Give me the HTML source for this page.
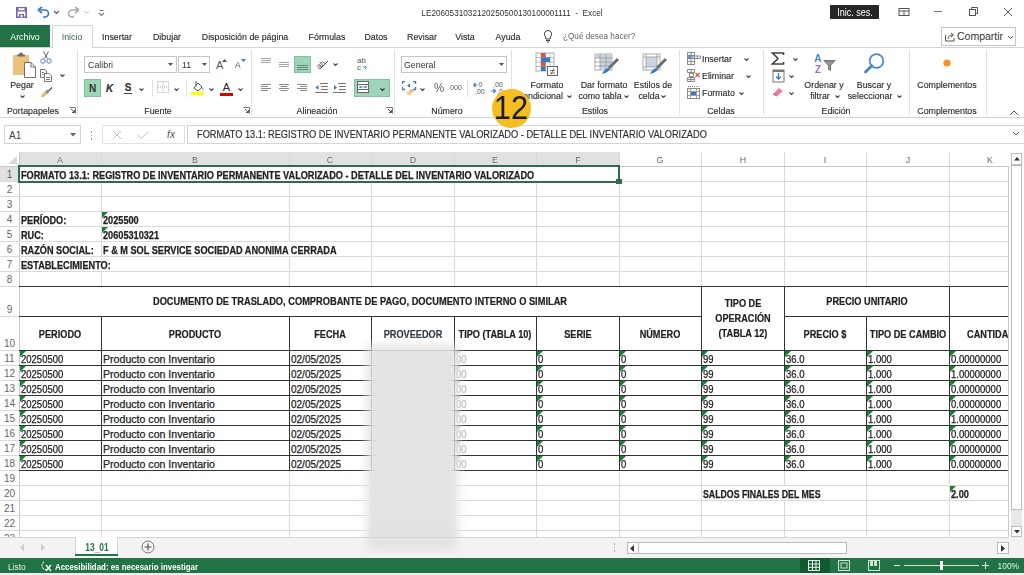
<!DOCTYPE html><html><head><meta charset="utf-8"><style>html,body{margin:0;padding:0;width:1024px;height:575px;overflow:hidden;background:#fff;}body{font-family:"Liberation Sans", sans-serif;position:relative;}.a{position:absolute;}.t{white-space:pre;}</style></head><body>
<svg class="a" style="left:15px;top:6px;" width="14" height="13" viewBox="0 0 14 13"><path d="M1.8 1.8 H11.2 V11.2 H1.8 Z" fill="none" stroke="#7f62b0" stroke-width="1.6"/><rect x="1" y="1" width="11" height="4.5" fill="#7f62b0"/><rect x="3.5" y="2.2" width="6" height="2" fill="#fff"/><rect x="4" y="8" width="5" height="3.5" fill="#7f62b0"/><rect x="5.5" y="9" width="2" height="2.5" fill="#fff"/></svg>
<svg class="a" style="left:37px;top:6px;" width="14" height="13" viewBox="0 0 14 13"><path d="M3 4 H8 A3.5 3.5 0 0 1 8 11 H6" fill="none" stroke="#3a78c3" stroke-width="1.6"/><path d="M1 4 L5 1 M1 4 L5 7" stroke="#3a78c3" stroke-width="1.6" fill="none"/></svg>
<svg class="a" style="left:53px;top:10px;" width="7" height="5" viewBox="0 0 7 5"><path d="M1 1 L3.5 3.5 L6 1" fill="none" stroke="#555" stroke-width="1.1"/></svg>
<svg class="a" style="left:66px;top:6px;" width="14" height="13" viewBox="0 0 14 13"><path d="M11 4 H6 A3.5 3.5 0 0 0 6 11 H8" fill="none" stroke="#aaa" stroke-width="1.6"/><path d="M13 4 L9 1 M13 4 L9 7" stroke="#aaa" stroke-width="1.6" fill="none"/></svg>
<svg class="a" style="left:83px;top:10px;" width="7" height="5" viewBox="0 0 7 5"><path d="M1 1 L3.5 3.5 L6 1" fill="none" stroke="#bbb" stroke-width="1"/></svg>
<svg class="a" style="left:98px;top:9px;" width="7" height="8" viewBox="0 0 7 8"><rect x="1.5" y="1" width="4" height="1" fill="#777"/><path d="M1 4 L3.5 6.5 L6 4" fill="none" stroke="#777" stroke-width="1.1"/></svg>
<div class="a t" style="left:112px;width:800px;text-align:center;top:8.88px;font-size:9px;line-height:9px;color:#333;font-weight:normal;transform:scaleX(0.91);transform-origin:center top;">LE2060531032120250500130100001111  -  Excel</div>
<div class="a" style="left:830px;top:5px;width:49px;height:14px;background:#262626;border-radius:1px;"></div>
<div class="a t" style="left:454.5px;width:800px;text-align:center;top:7.54px;font-size:10px;line-height:10px;color:#fff;font-weight:normal;transform:scaleX(0.9);transform-origin:center top;">Inic. ses.</div>
<svg class="a" style="left:898px;top:7px;" width="12" height="10" viewBox="0 0 12 10"><rect x="1" y="1.5" width="10" height="7" fill="none" stroke="#555" stroke-width="1"/><path d="M1 4 H11 M6 4 V8.5" stroke="#555" stroke-width="1"/></svg>
<div class="a" style="left:934px;top:11px;width:8px;height:1px;background:#777;"></div>
<svg class="a" style="left:968px;top:6px;" width="11" height="11" viewBox="0 0 11 11"><rect x="1.5" y="3.5" width="6" height="6" fill="none" stroke="#555" stroke-width="1"/><path d="M3.5 3.5 V1.5 H9.5 V7.5 H7.5" fill="none" stroke="#555" stroke-width="1"/></svg>
<svg class="a" style="left:1003px;top:7px;" width="10" height="10" viewBox="0 0 10 10"><path d="M1 1 L9 9 M9 1 L1 9" stroke="#555" stroke-width="1"/></svg>
<div class="a" style="left:0px;top:25px;width:50px;height:22px;background:#217346;"></div>
<div class="a t" style="left:-375px;width:800px;text-align:center;top:31.96px;font-size:9.5px;line-height:9.5px;color:#fff;font-weight:normal;transform:scaleX(0.93);transform-origin:center top;">Archivo</div>
<div class="a" style="left:52px;top:25px;width:41px;height:23px;background:#fff;border:1px solid #d4d4d4;box-sizing:border-box;border-bottom:none;"></div>
<div class="a" style="left:0px;top:47px;width:52px;height:1px;background:#d4d4d4;"></div>
<div class="a" style="left:93px;top:47px;width:931px;height:1px;background:#d4d4d4;"></div>
<div class="a t" style="left:-328px;width:800px;text-align:center;top:31.96px;font-size:9.5px;line-height:9.5px;color:#2e6b4d;font-weight:normal;transform:scaleX(0.93);transform-origin:center top;">Inicio</div>
<div class="a t" style="left:-282.7px;width:800px;text-align:center;top:31.96px;font-size:9.5px;line-height:9.5px;color:#2d2d2d;font-weight:normal;-webkit-text-stroke:0.15px currentColor;transform:scaleX(0.93);transform-origin:center top;">Insertar</div>
<div class="a t" style="left:-233.3px;width:800px;text-align:center;top:31.96px;font-size:9.5px;line-height:9.5px;color:#2d2d2d;font-weight:normal;-webkit-text-stroke:0.15px currentColor;transform:scaleX(0.93);transform-origin:center top;">Dibujar</div>
<div class="a t" style="left:-155.5px;width:800px;text-align:center;top:31.96px;font-size:9.5px;line-height:9.5px;color:#2d2d2d;font-weight:normal;-webkit-text-stroke:0.15px currentColor;transform:scaleX(0.93);transform-origin:center top;">Disposición de página</div>
<div class="a t" style="left:-73px;width:800px;text-align:center;top:31.96px;font-size:9.5px;line-height:9.5px;color:#2d2d2d;font-weight:normal;-webkit-text-stroke:0.15px currentColor;transform:scaleX(0.93);transform-origin:center top;">Fórmulas</div>
<div class="a t" style="left:-24px;width:800px;text-align:center;top:31.96px;font-size:9.5px;line-height:9.5px;color:#2d2d2d;font-weight:normal;-webkit-text-stroke:0.15px currentColor;transform:scaleX(0.93);transform-origin:center top;">Datos</div>
<div class="a t" style="left:22px;width:800px;text-align:center;top:31.96px;font-size:9.5px;line-height:9.5px;color:#2d2d2d;font-weight:normal;-webkit-text-stroke:0.15px currentColor;transform:scaleX(0.93);transform-origin:center top;">Revisar</div>
<div class="a t" style="left:65px;width:800px;text-align:center;top:31.96px;font-size:9.5px;line-height:9.5px;color:#2d2d2d;font-weight:normal;-webkit-text-stroke:0.15px currentColor;transform:scaleX(0.93);transform-origin:center top;">Vista</div>
<div class="a t" style="left:108px;width:800px;text-align:center;top:31.96px;font-size:9.5px;line-height:9.5px;color:#2d2d2d;font-weight:normal;-webkit-text-stroke:0.15px currentColor;transform:scaleX(0.93);transform-origin:center top;">Ayuda</div>
<svg class="a" style="left:543px;top:29px;" width="10" height="14" viewBox="0 0 10 14"><path d="M5 1.5 A3.6 3.6 0 0 1 7.2 8 V10 H2.8 V8 A3.6 3.6 0 0 1 5 1.5 Z" fill="none" stroke="#444" stroke-width="1"/><path d="M3 11.5 H7 M3.8 13 H6.2" stroke="#444" stroke-width="1"/></svg>
<div class="a t" style="left:563px;top:32.38px;font-size:9px;line-height:9px;color:#666;font-weight:normal;transform:scaleX(0.91);transform-origin:left top;">¿Qué desea hacer?</div>
<div class="a" style="left:941px;top:27px;width:75px;height:19px;background:#fff;border:1px solid #c6c6c6;box-sizing:border-box;"></div>
<svg class="a" style="left:944px;top:31px;" width="12" height="11" viewBox="0 0 12 11"><path d="M1.5 4 V10 H10 V7" fill="none" stroke="#555" stroke-width="1"/><path d="M4 8 Q4 4 9 4 M7 2 L9.5 4 L7 6" fill="none" stroke="#555" stroke-width="1"/></svg>
<div class="a t" style="left:957px;top:31.11px;font-size:10.5px;line-height:10.5px;color:#333;font-weight:normal;">Compartir</div>
<svg class="a" style="left:1007px;top:35px;" width="7" height="5" viewBox="0 0 7 5"><path d="M1 1 L3.5 3.5 L6 1" fill="none" stroke="#555" stroke-width="1"/></svg>
<div class="a" style="left:0px;top:117px;width:1024px;height:1px;background:#d4d4d4;"></div>
<div class="a" style="left:77px;top:50px;width:1px;height:65px;background:#e1e1e1;"></div>
<div class="a" style="left:251px;top:50px;width:1px;height:65px;background:#e1e1e1;"></div>
<div class="a" style="left:394px;top:50px;width:1px;height:65px;background:#e1e1e1;"></div>
<div class="a" style="left:511px;top:50px;width:1px;height:65px;background:#e1e1e1;"></div>
<div class="a" style="left:679px;top:50px;width:1px;height:65px;background:#e1e1e1;"></div>
<div class="a" style="left:763px;top:50px;width:1px;height:65px;background:#e1e1e1;"></div>
<div class="a" style="left:909px;top:50px;width:1px;height:65px;background:#e1e1e1;"></div>
<div class="a" style="left:986px;top:50px;width:1px;height:65px;background:#e1e1e1;"></div>
<div class="a t" style="left:-367px;width:800px;text-align:center;top:105.96px;font-size:9.5px;line-height:9.5px;color:#2d2d2d;font-weight:normal;-webkit-text-stroke:0.15px currentColor;transform:scaleX(0.93);transform-origin:center top;">Portapapeles</div>
<div class="a t" style="left:-242px;width:800px;text-align:center;top:105.96px;font-size:9.5px;line-height:9.5px;color:#2d2d2d;font-weight:normal;-webkit-text-stroke:0.15px currentColor;transform:scaleX(0.93);transform-origin:center top;">Fuente</div>
<div class="a t" style="left:-83px;width:800px;text-align:center;top:105.96px;font-size:9.5px;line-height:9.5px;color:#2d2d2d;font-weight:normal;-webkit-text-stroke:0.15px currentColor;transform:scaleX(0.93);transform-origin:center top;">Alineación</div>
<div class="a t" style="left:47px;width:800px;text-align:center;top:105.96px;font-size:9.5px;line-height:9.5px;color:#2d2d2d;font-weight:normal;-webkit-text-stroke:0.15px currentColor;transform:scaleX(0.93);transform-origin:center top;">Número</div>
<div class="a t" style="left:195px;width:800px;text-align:center;top:105.96px;font-size:9.5px;line-height:9.5px;color:#2d2d2d;font-weight:normal;-webkit-text-stroke:0.15px currentColor;transform:scaleX(0.93);transform-origin:center top;">Estilos</div>
<div class="a t" style="left:321px;width:800px;text-align:center;top:105.96px;font-size:9.5px;line-height:9.5px;color:#2d2d2d;font-weight:normal;-webkit-text-stroke:0.15px currentColor;transform:scaleX(0.93);transform-origin:center top;">Celdas</div>
<div class="a t" style="left:436px;width:800px;text-align:center;top:105.96px;font-size:9.5px;line-height:9.5px;color:#2d2d2d;font-weight:normal;-webkit-text-stroke:0.15px currentColor;transform:scaleX(0.93);transform-origin:center top;">Edición</div>
<div class="a t" style="left:547px;width:800px;text-align:center;top:105.96px;font-size:9.5px;line-height:9.5px;color:#2d2d2d;font-weight:normal;-webkit-text-stroke:0.15px currentColor;transform:scaleX(0.93);transform-origin:center top;">Complementos</div>
<svg class="a" style="left:69px;top:107px;" width="7" height="7" viewBox="0 0 7 7"><path d="M0.5 0.5 H6.5 V6.5" fill="none" stroke="#777" stroke-width="1"/><path d="M2 2 L5.5 5.5 M3 5.5 H5.5 V3" fill="none" stroke="#555" stroke-width="1"/></svg>
<svg class="a" style="left:243px;top:107px;" width="7" height="7" viewBox="0 0 7 7"><path d="M0.5 0.5 H6.5 V6.5" fill="none" stroke="#777" stroke-width="1"/><path d="M2 2 L5.5 5.5 M3 5.5 H5.5 V3" fill="none" stroke="#555" stroke-width="1"/></svg>
<svg class="a" style="left:386px;top:107px;" width="7" height="7" viewBox="0 0 7 7"><path d="M0.5 0.5 H6.5 V6.5" fill="none" stroke="#777" stroke-width="1"/><path d="M2 2 L5.5 5.5 M3 5.5 H5.5 V3" fill="none" stroke="#555" stroke-width="1"/></svg>
<svg class="a" style="left:11px;top:51px;" width="26" height="27" viewBox="0 0 26 27"><rect x="2" y="4" width="16" height="20" fill="#ebc27a"/><path d="M6 5.5 V3.5 H8 A2 2 0 0 1 12 3.5 H14 V5.5 Z" fill="#6e6e6e"/><path d="M13.5 11.5 H20 L24.5 16 V26.5 H13.5 Z" fill="#fff" stroke="#6e6e6e" stroke-width="1"/><path d="M20 11.5 V16 H24.5" fill="none" stroke="#6e6e6e" stroke-width="1"/></svg>
<div class="a t" style="left:-378px;width:800px;text-align:center;top:79.96px;font-size:9.5px;line-height:9.5px;color:#2d2d2d;font-weight:normal;-webkit-text-stroke:0.15px currentColor;transform:scaleX(0.93);transform-origin:center top;">Pegar</div>
<svg class="a" style="left:19px;top:94px;" width="7" height="5" viewBox="0 0 7 5"><path d="M1.5 1.5 L3.5 3.5 L5.5 1.5" fill="none" stroke="#444" stroke-width="1.1"/></svg>
<svg class="a" style="left:40px;top:51px;" width="12" height="13" viewBox="0 0 12 13"><path d="M3.5 0.5 L7.5 7.5 M8.5 0.5 L4.5 7.5" stroke="#666" stroke-width="1" fill="none"/><circle cx="3" cy="10" r="2.2" fill="none" stroke="#4f7fb8" stroke-width="1"/><circle cx="9" cy="10" r="2.2" fill="none" stroke="#4f7fb8" stroke-width="1"/></svg>
<svg class="a" style="left:40px;top:69px;" width="12" height="13" viewBox="0 0 12 13"><path d="M0.5 0.5 H5 L6.5 2 V8.5 H0.5 Z" fill="#fff" stroke="#777" stroke-width="1"/><path d="M4.5 4.5 H9 L11.5 7 V12.5 H4.5 Z" fill="#fff" stroke="#777" stroke-width="1"/><path d="M6 8.5 H10 M6 10.5 H10 M2 3.5 H4 M2 5.5 H3.5" stroke="#777" stroke-width="1"/></svg>
<svg class="a" style="left:59px;top:73px;" width="7" height="5" viewBox="0 0 7 5"><path d="M1.5 1.5 L3.5 3.5 L5.5 1.5" fill="none" stroke="#444" stroke-width="1.1"/></svg>
<svg class="a" style="left:40px;top:86px;" width="13" height="12" viewBox="0 0 13 12"><path d="M0.5 10 L5 5.5 L7.5 8 L2.5 11.5 Z" fill="#eab462"/><path d="M5 5.5 L7 3.5 L9.5 6 L7.5 8 Z" fill="#8a8a8a"/><path d="M8 4.5 L11.5 1 L12.5 2 L9 5.5 Z" fill="#5e5e5e"/></svg>
<div class="a" style="left:84px;top:56px;width:93px;height:17px;background:#fff;border:1px solid #c6c6c6;box-sizing:border-box;"></div>
<div class="a t" style="left:88px;top:59.96px;font-size:9.5px;line-height:9.5px;color:#333;font-weight:normal;transform:scaleX(0.93);transform-origin:left top;">Calibri</div>
<svg class="a" style="left:168px;top:63px;" width="5" height="3" viewBox="0 0 5 3"><path d="M0 0 H5 L2.5 3 Z" fill="#555"/></svg>
<div class="a" style="left:178px;top:56px;width:32px;height:17px;background:#fff;border:1px solid #c6c6c6;box-sizing:border-box;"></div>
<div class="a t" style="left:181.5px;top:59.96px;font-size:9.5px;line-height:9.5px;color:#333;font-weight:normal;transform:scaleX(0.93);transform-origin:left top;">11</div>
<svg class="a" style="left:202px;top:63px;" width="5" height="3" viewBox="0 0 5 3"><path d="M0 0 H5 L2.5 3 Z" fill="#555"/></svg>
<div class="a t" style="left:216px;top:59.69px;font-size:11px;line-height:11px;color:#555;font-weight:normal;">A</div>
<svg class="a" style="left:222px;top:59px;" width="5" height="3" viewBox="0 0 5 3"><path d="M0 3 L2.5 0 L5 3" fill="#555"/></svg>
<div class="a t" style="left:235px;top:61.38px;font-size:9px;line-height:9px;color:#555;font-weight:normal;transform:scaleX(0.93);transform-origin:left top;">A</div>
<svg class="a" style="left:241px;top:59px;" width="5" height="3" viewBox="0 0 5 3"><path d="M0 0 H5 L2.5 3 Z" fill="#3a78c3"/></svg>
<div class="a" style="left:84px;top:79px;width:17px;height:18px;background:#9fd5b7;border:1px solid #86bfa0;box-sizing:border-box;"></div>
<div class="a t" style="left:-307.5px;width:800px;text-align:center;top:83.53px;font-size:10px;line-height:10px;color:#333;font-weight:bold;">N</div>
<div class="a t" style="left:-290.5px;width:800px;text-align:center;top:83.53px;font-size:10px;line-height:10px;color:#2d2d2d;font-weight:bold;-webkit-text-stroke:0.15px currentColor;font-style:italic;">K</div>
<div class="a t" style="left:-272px;width:800px;text-align:center;top:83.03px;font-size:10px;line-height:10px;color:#2d2d2d;font-weight:bold;-webkit-text-stroke:0.15px currentColor;">S</div>
<div class="a" style="left:124px;top:93px;width:8px;height:1px;background:#444;"></div>
<svg class="a" style="left:138px;top:87px;" width="7" height="5" viewBox="0 0 7 5"><path d="M1.5 1.5 L3.5 3.5 L5.5 1.5" fill="none" stroke="#444" stroke-width="1.1"/></svg>
<div class="a" style="left:152px;top:80px;width:1px;height:17px;background:#e1e1e1;"></div>
<svg class="a" style="left:157px;top:81px;" width="12" height="13" viewBox="0 0 12 13"><rect x="0.5" y="0.5" width="11" height="11" fill="none" stroke="#aaa" stroke-width="1" stroke-dasharray="1 1"/><path d="M6 1 V11 M1 6 H11" stroke="#aaa" stroke-width="1" stroke-dasharray="1 1"/></svg>
<svg class="a" style="left:173px;top:87px;" width="7" height="5" viewBox="0 0 7 5"><path d="M1.5 1.5 L3.5 3.5 L5.5 1.5" fill="none" stroke="#444" stroke-width="1.1"/></svg>
<div class="a" style="left:186px;top:80px;width:1px;height:17px;background:#e1e1e1;"></div>
<svg class="a" style="left:190px;top:79px;" width="16" height="17" viewBox="0 0 16 17"><path d="M4 9 L8 4 L12 8 L8 12 Z" fill="#fff" stroke="#555" stroke-width="1"/><path d="M6 2 V7" stroke="#555" stroke-width="1"/><path d="M12 8 Q14 10 13.5 11.5 Q12 11 12 8" fill="#3a78c3"/><rect x="1" y="13" width="13" height="3" fill="#ffff00"/></svg>
<svg class="a" style="left:208px;top:87px;" width="7" height="5" viewBox="0 0 7 5"><path d="M1.5 1.5 L3.5 3.5 L5.5 1.5" fill="none" stroke="#444" stroke-width="1.1"/></svg>
<div class="a t" style="left:-173.5px;width:800px;text-align:center;top:81.69px;font-size:11px;line-height:11px;color:#2d2d2d;font-weight:normal;-webkit-text-stroke:0.15px currentColor;">A</div>
<div class="a" style="left:220px;top:93px;width:13px;height:3px;background:#e00000;"></div>
<svg class="a" style="left:237px;top:87px;" width="7" height="5" viewBox="0 0 7 5"><path d="M1.5 1.5 L3.5 3.5 L5.5 1.5" fill="none" stroke="#444" stroke-width="1.1"/></svg>
<svg class="a" style="left:261px;top:58px;" width="14" height="7" viewBox="0 0 14 7"><rect x="0" y="0" width="10" height="1" fill="#a6a6a6"/><rect x="0" y="2" width="10" height="1" fill="#a6a6a6"/><rect x="0" y="4" width="10" height="1" fill="#a6a6a6"/></svg>
<svg class="a" style="left:279px;top:62px;" width="14" height="7" viewBox="0 0 14 7"><rect x="0" y="0" width="10" height="1" fill="#a6a6a6"/><rect x="0" y="2" width="10" height="1" fill="#a6a6a6"/><rect x="0" y="4" width="10" height="1" fill="#a6a6a6"/></svg>
<div class="a" style="left:294px;top:56px;width:17px;height:17px;background:#9fd5b7;border:1px solid #86bfa0;box-sizing:border-box;"></div>
<svg class="a" style="left:297px;top:65px;" width="14" height="7" viewBox="0 0 14 7"><rect x="0" y="0" width="11" height="1" fill="#6a8a78"/><rect x="0" y="2" width="11" height="1" fill="#6a8a78"/><rect x="0" y="4" width="11" height="1" fill="#6a8a78"/></svg>
<svg class="a" style="left:315px;top:57px;" width="15" height="14" viewBox="0 0 15 14"><text x="1" y="10" font-size="8" font-family="Liberation Sans" fill="#555" transform="rotate(-40 6 7)">ab</text><path d="M5 12 L13 4" stroke="#555" stroke-width="1"/></svg>
<svg class="a" style="left:332px;top:62px;" width="7" height="5" viewBox="0 0 7 5"><path d="M1.5 1.5 L3.5 3.5 L5.5 1.5" fill="none" stroke="#444" stroke-width="1.1"/></svg>
<svg class="a" style="left:357px;top:56px;" width="12" height="15" viewBox="0 0 12 15"><text x="0" y="7" font-size="8" font-family="Liberation Sans" fill="#555">ab</text><text x="0" y="14" font-size="8" font-family="Liberation Sans" fill="#555">c</text><path d="M6 11 L9 11 M8 10 L9.5 11.5 L8 13" stroke="#3a78c3" stroke-width="0.9" fill="none"/></svg>
<svg class="a" style="left:261px;top:84px;" width="14" height="9" viewBox="0 0 14 9"><rect x="0" y="0" width="10" height="1" fill="#8a8a8a"/><rect x="0" y="2" width="7" height="1" fill="#8a8a8a"/><rect x="0" y="4" width="10" height="1" fill="#8a8a8a"/><rect x="0" y="6" width="7" height="1" fill="#8a8a8a"/></svg>
<svg class="a" style="left:279px;top:84px;" width="14" height="9" viewBox="0 0 14 9"><rect x="0" y="0" width="10" height="1" fill="#8a8a8a"/><rect x="1.5" y="2" width="7" height="1" fill="#8a8a8a"/><rect x="0" y="4" width="10" height="1" fill="#8a8a8a"/><rect x="1.5" y="6" width="7" height="1" fill="#8a8a8a"/></svg>
<svg class="a" style="left:297px;top:84px;" width="14" height="9" viewBox="0 0 14 9"><rect x="0" y="0" width="10" height="1" fill="#8a8a8a"/><rect x="3" y="2" width="7" height="1" fill="#8a8a8a"/><rect x="0" y="4" width="10" height="1" fill="#8a8a8a"/><rect x="3" y="6" width="7" height="1" fill="#8a8a8a"/></svg>
<svg class="a" style="left:315px;top:83px;" width="13" height="10" viewBox="0 0 13 10"><rect x="5" y="0" width="8" height="1" fill="#777"/><rect x="6" y="3" width="7" height="1" fill="#777"/><rect x="6" y="6" width="7" height="1" fill="#777"/><rect x="0" y="9" width="13" height="1" fill="#777"/><path d="M0.5 4.5 L3.5 2 V7 Z" fill="#3a78c3"/></svg>
<svg class="a" style="left:333px;top:83px;" width="13" height="10" viewBox="0 0 13 10"><rect x="5" y="0" width="8" height="1" fill="#777"/><rect x="6" y="3" width="7" height="1" fill="#777"/><rect x="6" y="6" width="7" height="1" fill="#777"/><rect x="0" y="9" width="13" height="1" fill="#777"/><path d="M4 4.5 L1 2 V7 Z" fill="#3a78c3"/></svg>
<div class="a" style="left:354px;top:79px;width:36px;height:18px;background:#9fd5b7;border:1px solid #86bfa0;box-sizing:border-box;"></div>
<svg class="a" style="left:357px;top:81px;" width="13" height="13" viewBox="0 0 13 13"><rect x="0.5" y="0.5" width="11" height="11" fill="#fff" stroke="#666" stroke-width="1"/><path d="M0.5 3.5 H11.5 M0.5 8.5 H11.5" stroke="#666" stroke-width="1"/><path d="M2.5 6 H9.5 M2.5 6 L4 5 M2.5 6 L4 7 M9.5 6 L8 5 M9.5 6 L8 7" stroke="#3a78c3" stroke-width="0.9" fill="none"/></svg>
<svg class="a" style="left:379px;top:87px;" width="7" height="5" viewBox="0 0 7 5"><path d="M1.5 1.5 L3.5 3.5 L5.5 1.5" fill="none" stroke="#333" stroke-width="1.1"/></svg>
<div class="a" style="left:401px;top:56px;width:106px;height:17px;background:#fff;border:1px solid #c6c6c6;box-sizing:border-box;"></div>
<div class="a t" style="left:404px;top:59.96px;font-size:9.5px;line-height:9.5px;color:#333;font-weight:normal;transform:scaleX(0.93);transform-origin:left top;">General</div>
<svg class="a" style="left:499px;top:63px;" width="5" height="3" viewBox="0 0 5 3"><path d="M0 0 H5 L2.5 3 Z" fill="#555"/></svg>
<svg class="a" style="left:402px;top:81px;" width="15" height="15" viewBox="0 0 15 15"><rect x="0.5" y="0.5" width="13" height="8" fill="#fff"/><path d="M0.5 3 V0.5 H3 M11 0.5 H13.5 V3 M13.5 6 V8.5 H11 M3 8.5 H0.5 V6" fill="none" stroke="#3a78c3" stroke-width="1.4"/><path d="M5 4.5 L8 2.5 V6.5 Z" fill="#3a78c3"/><ellipse cx="9.5" cy="10" rx="2.6" ry="1.4" fill="#f2b36a"/><ellipse cx="7" cy="12.5" rx="2.6" ry="1.4" fill="#f5c890"/></svg>
<svg class="a" style="left:419px;top:87px;" width="7" height="5" viewBox="0 0 7 5"><path d="M1.5 1.5 L3.5 3.5 L5.5 1.5" fill="none" stroke="#444" stroke-width="1.1"/></svg>
<div class="a t" style="left:38.5px;width:800px;text-align:center;top:82.34px;font-size:12px;line-height:12px;color:#5a5a5a;font-weight:normal;transform:scaleX(0.95);transform-origin:center top;">%</div>
<div class="a t" style="left:55.5px;width:800px;text-align:center;top:84.15px;font-size:7.5px;line-height:7.5px;color:#5a5a5a;font-weight:normal;transform:scaleX(0.95);transform-origin:center top;">000</div>
<div class="a" style="left:467px;top:80px;width:1px;height:17px;background:#e1e1e1;"></div>
<svg class="a" style="left:472px;top:80px;" width="14" height="15" viewBox="0 0 14 15"><text x="6.5" y="7" font-size="7" font-family="Liberation Sans" fill="#555">0</text><text x="3" y="13.5" font-size="7" font-family="Liberation Sans" fill="#555">,00</text><path d="M1.5 5 H5.5 M1.5 5 L3.5 3 M1.5 5 L3.5 7" stroke="#3a78c3" stroke-width="1.1" fill="none"/></svg>
<svg class="a" style="left:490px;top:80px;" width="14" height="15" viewBox="0 0 14 15"><text x="3" y="7" font-size="7" font-family="Liberation Sans" fill="#555">,00</text><text x="7" y="13.5" font-size="7" font-family="Liberation Sans" fill="#555">,0</text><path d="M1 11 H5.5 M5.5 11 L3.5 9 M5.5 11 L3.5 13" stroke="#3a78c3" stroke-width="1.1" fill="none"/></svg>
<svg class="a" style="left:535px;top:52px;" width="24" height="25" viewBox="0 0 24 25"><g stroke="#999" stroke-width="0.8" fill="#fff"><rect x="1" y="1" width="18" height="18"/></g><path d="M1 5.5 H19 M1 10 H19 M1 14.5 H19 M6 1 V19 M10.5 1 V19 M15 1 V19" stroke="#aaa" stroke-width="0.8"/><rect x="6" y="1" width="4.5" height="4.5" fill="#e0523f"/><rect x="6" y="5.5" width="9" height="4.5" fill="#3a78c3"/><rect x="6" y="10" width="4.5" height="4.5" fill="#e0523f"/><rect x="6" y="14.5" width="4.5" height="4.5" fill="#3a78c3"/><rect x="12.5" y="14.5" width="10" height="9" fill="#fff" stroke="#666" stroke-width="1"/><path d="M15 21 H20 M15 18.5 H20 M19 16.5 L16 22.5" stroke="#555" stroke-width="0.8"/></svg>
<div class="a t" style="left:147px;width:800px;text-align:center;top:79.96px;font-size:9.5px;line-height:9.5px;color:#2d2d2d;font-weight:normal;-webkit-text-stroke:0.15px currentColor;transform:scaleX(0.93);transform-origin:center top;">Formato</div>
<div class="a t" style="left:143px;width:800px;text-align:center;top:90.96px;font-size:9.5px;line-height:9.5px;color:#2d2d2d;font-weight:normal;-webkit-text-stroke:0.15px currentColor;transform:scaleX(0.93);transform-origin:center top;">ondicional</div>
<svg class="a" style="left:566px;top:94px;" width="7" height="5" viewBox="0 0 7 5"><path d="M1.5 1.5 L3.5 3.5 L5.5 1.5" fill="none" stroke="#444" stroke-width="1.1"/></svg>
<svg class="a" style="left:594px;top:53px;" width="26" height="24" viewBox="0 0 26 24"><rect x="1" y="1" width="17" height="16" fill="#fff" stroke="#999" stroke-width="0.8"/><rect x="1" y="1" width="17" height="4" fill="#c8d4e0"/><rect x="6" y="5" width="12" height="12" fill="#c8d4e0"/><path d="M1 5 H18 M1 9 H18 M1 13 H18 M6 1 V17 M12 1 V17" stroke="#999" stroke-width="0.8"/><path d="M14 14 L23 5 L25 7 L16 16 Z" fill="#6b6b6b"/><path d="M8 21 Q11 14 16 15 Q16 19 8 21 Z" fill="#3a78c3"/></svg>
<div class="a t" style="left:204px;width:800px;text-align:center;top:79.96px;font-size:9.5px;line-height:9.5px;color:#2d2d2d;font-weight:normal;-webkit-text-stroke:0.15px currentColor;transform:scaleX(0.93);transform-origin:center top;">Dar formato</div>
<div class="a t" style="left:200px;width:800px;text-align:center;top:90.96px;font-size:9.5px;line-height:9.5px;color:#2d2d2d;font-weight:normal;-webkit-text-stroke:0.15px currentColor;transform:scaleX(0.93);transform-origin:center top;">como tabla</div>
<svg class="a" style="left:623px;top:94px;" width="7" height="5" viewBox="0 0 7 5"><path d="M1.5 1.5 L3.5 3.5 L5.5 1.5" fill="none" stroke="#444" stroke-width="1.1"/></svg>
<svg class="a" style="left:642px;top:53px;" width="26" height="24" viewBox="0 0 26 24"><rect x="1" y="1" width="17" height="16" fill="#fff" stroke="#999" stroke-width="0.8"/><rect x="4" y="4" width="11" height="10" fill="#c8d4e0"/><path d="M1 4 H18 M1 14 H18 M4 1 V17 M15 1 V17" stroke="#999" stroke-width="0.8"/><path d="M14 14 L23 5 L25 7 L16 16 Z" fill="#6b6b6b"/><path d="M8 21 Q11 14 16 15 Q16 19 8 21 Z" fill="#3a78c3"/></svg>
<div class="a t" style="left:253px;width:800px;text-align:center;top:79.96px;font-size:9.5px;line-height:9.5px;color:#2d2d2d;font-weight:normal;-webkit-text-stroke:0.15px currentColor;transform:scaleX(0.93);transform-origin:center top;">Estilos de</div>
<div class="a t" style="left:249px;width:800px;text-align:center;top:90.96px;font-size:9.5px;line-height:9.5px;color:#2d2d2d;font-weight:normal;-webkit-text-stroke:0.15px currentColor;transform:scaleX(0.93);transform-origin:center top;">celda</div>
<svg class="a" style="left:660px;top:94px;" width="7" height="5" viewBox="0 0 7 5"><path d="M1.5 1.5 L3.5 3.5 L5.5 1.5" fill="none" stroke="#444" stroke-width="1.1"/></svg>
<svg class="a" style="left:687px;top:52px;" width="15" height="13" viewBox="0 0 15 13"><path d="M0.5 0.5 H7.5 V12.5 H0.5 Z M0.5 3.5 H7.5 M0.5 6.5 H7.5 M0.5 9.5 H7.5 M4 0.5 V12.5 M7.5 4 H13.5 V6.5 H7.5 M10.5 4 V6.5" fill="none" stroke="#8a8a8a" stroke-width="1"/><rect x="1" y="4" width="6" height="2" fill="#dbe6f2"/><path d="M1.5 5 H6.5 M1.5 5 L3.5 3.5 M1.5 5 L3.5 6.5" stroke="#3a78c3" stroke-width="1.1" fill="none"/></svg>
<div class="a t" style="left:702px;top:54.46px;font-size:9.5px;line-height:9.5px;color:#2d2d2d;font-weight:normal;-webkit-text-stroke:0.15px currentColor;transform:scaleX(0.93);transform-origin:left top;">Insertar</div>
<svg class="a" style="left:743px;top:57px;" width="7" height="5" viewBox="0 0 7 5"><path d="M1.5 1.5 L3.5 3.5 L5.5 1.5" fill="none" stroke="#444" stroke-width="1.1"/></svg>
<svg class="a" style="left:687px;top:69px;" width="15" height="13" viewBox="0 0 15 13"><path d="M0.5 0.5 H7.5 V3.5 H0.5 Z M0.5 8.5 H7.5 V12.5 H0.5 Z M4 0.5 V3.5 M4 8.5 V12.5 M0.5 10.5 H7.5 M2.5 4.5 H6.5 V7.5 H2.5 Z" fill="none" stroke="#8a8a8a" stroke-width="1"/><path d="M8.5 4 L12.5 8 M12.5 4 L8.5 8" stroke="#e0523f" stroke-width="1.2"/></svg>
<div class="a t" style="left:702px;top:71.46px;font-size:9.5px;line-height:9.5px;color:#2d2d2d;font-weight:normal;-webkit-text-stroke:0.15px currentColor;transform:scaleX(0.93);transform-origin:left top;">Eliminar</div>
<svg class="a" style="left:745px;top:74px;" width="7" height="5" viewBox="0 0 7 5"><path d="M1.5 1.5 L3.5 3.5 L5.5 1.5" fill="none" stroke="#444" stroke-width="1.1"/></svg>
<svg class="a" style="left:687px;top:86px;" width="13" height="13" viewBox="0 0 13 13"><rect x="0.5" y="2.5" width="12" height="10" fill="#fff" stroke="#8a8a8a" stroke-width="1"/><path d="M0.5 5.5 H12.5 M0.5 9.5 H12.5 M3.5 2.5 V12.5 M9.5 2.5 V12.5" stroke="#a0a0a0" stroke-width="1"/><rect x="4" y="6" width="5" height="3" fill="#3a78c3"/><path d="M1 0.5 H12" stroke="#8a8a8a" stroke-dasharray="1 1" stroke-width="1"/></svg>
<div class="a t" style="left:702px;top:88.46px;font-size:9.5px;line-height:9.5px;color:#2d2d2d;font-weight:normal;-webkit-text-stroke:0.15px currentColor;transform:scaleX(0.93);transform-origin:left top;">Formato</div>
<svg class="a" style="left:738px;top:91px;" width="7" height="5" viewBox="0 0 7 5"><path d="M1.5 1.5 L3.5 3.5 L5.5 1.5" fill="none" stroke="#444" stroke-width="1.1"/></svg>
<svg class="a" style="left:771px;top:52px;" width="14" height="13" viewBox="0 0 14 13"><path d="M12.5 3 V1 H1.5 L7 6.5 L1.5 12 H12.5 V10" fill="none" stroke="#444" stroke-width="1.6"/></svg>
<svg class="a" style="left:792px;top:57px;" width="7" height="5" viewBox="0 0 7 5"><path d="M1.5 1.5 L3.5 3.5 L5.5 1.5" fill="none" stroke="#444" stroke-width="1.1"/></svg>
<svg class="a" style="left:772px;top:69px;" width="13" height="14" viewBox="0 0 13 14"><rect x="1" y="1" width="11" height="12" fill="#fff" stroke="#777" stroke-width="1"/><rect x="1" y="1" width="11" height="2" fill="#777"/><path d="M6.5 4 V10 M4 7.5 L6.5 10 L9 7.5" stroke="#3a78c3" stroke-width="1.3" fill="none"/></svg>
<svg class="a" style="left:788px;top:74px;" width="7" height="5" viewBox="0 0 7 5"><path d="M1.5 1.5 L3.5 3.5 L5.5 1.5" fill="none" stroke="#444" stroke-width="1.1"/></svg>
<svg class="a" style="left:772px;top:86px;" width="12" height="11" viewBox="0 0 12 11"><path d="M1 8 L7 2 L11 5 L5 10 Z" fill="#e87d9a"/><path d="M1 8 L5 10" stroke="#d05070" stroke-width="1"/></svg>
<svg class="a" style="left:788px;top:91px;" width="7" height="5" viewBox="0 0 7 5"><path d="M1.5 1.5 L3.5 3.5 L5.5 1.5" fill="none" stroke="#444" stroke-width="1.1"/></svg>
<div class="a t" style="left:417.5px;width:800px;text-align:center;top:52.77px;font-size:11.5px;line-height:11.5px;color:#4a86c8;font-weight:bold;transform:scaleX(0.9);transform-origin:center top;">A</div>
<div class="a t" style="left:417.5px;width:800px;text-align:center;top:64.19px;font-size:11px;line-height:11px;color:#9b6fc6;font-weight:bold;transform:scaleX(0.9);transform-origin:center top;">Z</div>
<svg class="a" style="left:822px;top:59px;" width="15" height="13" viewBox="0 0 15 13"><path d="M1 1 H14 L9 6.5 V12 L6 10.5 V6.5 Z" fill="#777"/><path d="M3.5 2.5 H11.5 L8 6 V10 L7 9.5 V6 Z" fill="#999"/></svg>
<div class="a t" style="left:424px;width:800px;text-align:center;top:79.96px;font-size:9.5px;line-height:9.5px;color:#2d2d2d;font-weight:normal;-webkit-text-stroke:0.15px currentColor;transform:scaleX(0.93);transform-origin:center top;">Ordenar y</div>
<div class="a t" style="left:420px;width:800px;text-align:center;top:90.96px;font-size:9.5px;line-height:9.5px;color:#2d2d2d;font-weight:normal;-webkit-text-stroke:0.15px currentColor;transform:scaleX(0.93);transform-origin:center top;">filtrar</div>
<svg class="a" style="left:834px;top:94px;" width="7" height="5" viewBox="0 0 7 5"><path d="M1.5 1.5 L3.5 3.5 L5.5 1.5" fill="none" stroke="#444" stroke-width="1.1"/></svg>
<svg class="a" style="left:862px;top:52px;" width="24" height="24" viewBox="0 0 24 24"><circle cx="14.5" cy="9" r="6.8" fill="none" stroke="#4b87c5" stroke-width="1.7"/><path d="M9.8 13.8 L3.5 20" stroke="#4b87c5" stroke-width="2.8" stroke-linecap="round"/></svg>
<div class="a t" style="left:474px;width:800px;text-align:center;top:79.96px;font-size:9.5px;line-height:9.5px;color:#2d2d2d;font-weight:normal;-webkit-text-stroke:0.15px currentColor;transform:scaleX(0.93);transform-origin:center top;">Buscar y</div>
<div class="a t" style="left:470px;width:800px;text-align:center;top:90.96px;font-size:9.5px;line-height:9.5px;color:#2d2d2d;font-weight:normal;-webkit-text-stroke:0.15px currentColor;transform:scaleX(0.93);transform-origin:center top;">seleccionar</div>
<svg class="a" style="left:896px;top:94px;" width="7" height="5" viewBox="0 0 7 5"><path d="M1.5 1.5 L3.5 3.5 L5.5 1.5" fill="none" stroke="#444" stroke-width="1.1"/></svg>
<svg class="a" style="left:943px;top:59px;" width="8" height="8" viewBox="0 0 8 8"><circle cx="4" cy="4" r="3.6" fill="#f7941d"/></svg>
<div class="a t" style="left:547px;width:800px;text-align:center;top:79.96px;font-size:9.5px;line-height:9.5px;color:#2d2d2d;font-weight:normal;-webkit-text-stroke:0.15px currentColor;transform:scaleX(0.93);transform-origin:center top;">Complementos</div>
<svg class="a" style="left:1009px;top:110px;" width="10" height="6" viewBox="0 0 10 6"><path d="M1 5 L5 1 L9 5" fill="none" stroke="#555" stroke-width="1"/></svg>
<div class="a" style="left:4px;top:125px;width:77px;height:19px;background:#fff;border:1px solid #d4d4d4;box-sizing:border-box;"></div>
<div class="a t" style="left:9px;top:130.53px;font-size:10px;line-height:10px;color:#444;font-weight:normal;">A1</div>
<svg class="a" style="left:70px;top:133px;" width="6" height="4" viewBox="0 0 6 4"><path d="M0 0 H6 L3 3.5 Z" fill="#666"/></svg>
<div class="a" style="left:91px;top:131px;width:1px;height:1.5px;background:#999;"></div>
<div class="a" style="left:91px;top:134.5px;width:1px;height:1.5px;background:#999;"></div>
<div class="a" style="left:91px;top:138px;width:1px;height:1.5px;background:#999;"></div>
<div class="a" style="left:102px;top:125px;width:83px;height:19px;background:#fff;border:1px solid #e1e1e1;box-sizing:border-box;"></div>
<svg class="a" style="left:112px;top:130px;" width="10" height="10" viewBox="0 0 10 10"><path d="M1 1 L9 9 M9 1 L1 9" stroke="#c0c0c0" stroke-width="1"/></svg>
<svg class="a" style="left:137px;top:130px;" width="12" height="10" viewBox="0 0 12 10"><path d="M1 5 L4.5 8.5 L11 1.5" fill="none" stroke="#c0c0c0" stroke-width="1"/></svg>
<div class="a t" style="left:-229px;width:800px;text-align:center;top:130.03px;font-size:10px;line-height:10px;color:#555;font-weight:normal;font-style:italic;font-family:"Liberation Serif",serif;">fx</div>
<div class="a" style="left:187px;top:125px;width:837px;height:19px;background:#fff;border:1px solid #d4d4d4;box-sizing:border-box;border-right:none;"></div>
<div class="a t" style="left:197px;top:130.03px;font-size:10px;line-height:10px;color:#2d2d2d;font-weight:normal;-webkit-text-stroke:0.15px currentColor;transform:scaleX(0.924);transform-origin:left top;">FORMATO 13.1: REGISTRO DE INVENTARIO PERMANENTE VALORIZADO - DETALLE DEL INVENTARIO VALORIZADO</div>
<svg class="a" style="left:1012px;top:131px;" width="8" height="5" viewBox="0 0 8 5"><path d="M1 1 L4 4 L7 1" fill="none" stroke="#555" stroke-width="1"/></svg>
<div class="a" style="left:0px;top:152px;width:1008px;height:14px;background:#fff;"></div>
<div class="a" style="left:19px;top:152px;width:600px;height:14px;background:#e1e1e1;"></div>
<div class="a" style="left:0px;top:166px;width:19px;height:15px;background:#e1e1e1;"></div>
<svg class="a" style="left:6px;top:155px;" width="12" height="10" viewBox="0 0 12 10"><path d="M11 1 V9 H2 Z" fill="#d9d9d9"/></svg>
<div class="a" style="left:101px;top:152px;width:1px;height:385px;background:#dadada;"></div>
<div class="a" style="left:289px;top:152px;width:1px;height:385px;background:#dadada;"></div>
<div class="a" style="left:371px;top:152px;width:1px;height:385px;background:#dadada;"></div>
<div class="a" style="left:454px;top:152px;width:1px;height:385px;background:#dadada;"></div>
<div class="a" style="left:536px;top:152px;width:1px;height:385px;background:#dadada;"></div>
<div class="a" style="left:619px;top:152px;width:1px;height:385px;background:#dadada;"></div>
<div class="a" style="left:701px;top:152px;width:1px;height:385px;background:#dadada;"></div>
<div class="a" style="left:784px;top:152px;width:1px;height:385px;background:#dadada;"></div>
<div class="a" style="left:866px;top:152px;width:1px;height:385px;background:#dadada;"></div>
<div class="a" style="left:949px;top:152px;width:1px;height:385px;background:#dadada;"></div>
<div class="a" style="left:19px;top:152px;width:1px;height:385px;background:#c8c8c8;"></div>
<div class="a" style="left:1008px;top:166px;width:1px;height:371px;background:#c8c8c8;"></div>
<div class="a" style="left:0px;top:166px;width:1008px;height:1px;background:#c8c8c8;"></div>
<div class="a" style="left:0px;top:181px;width:1008px;height:1px;background:#dadada;"></div>
<div class="a" style="left:0px;top:196px;width:1008px;height:1px;background:#dadada;"></div>
<div class="a" style="left:0px;top:211px;width:1008px;height:1px;background:#dadada;"></div>
<div class="a" style="left:0px;top:226px;width:1008px;height:1px;background:#dadada;"></div>
<div class="a" style="left:0px;top:241px;width:1008px;height:1px;background:#dadada;"></div>
<div class="a" style="left:0px;top:256px;width:1008px;height:1px;background:#dadada;"></div>
<div class="a" style="left:0px;top:271px;width:1008px;height:1px;background:#dadada;"></div>
<div class="a" style="left:0px;top:286px;width:1008px;height:1px;background:#dadada;"></div>
<div class="a" style="left:0px;top:316px;width:1008px;height:1px;background:#dadada;"></div>
<div class="a" style="left:0px;top:350px;width:1008px;height:1px;background:#dadada;"></div>
<div class="a" style="left:0px;top:365px;width:1008px;height:1px;background:#dadada;"></div>
<div class="a" style="left:0px;top:380px;width:1008px;height:1px;background:#dadada;"></div>
<div class="a" style="left:0px;top:395px;width:1008px;height:1px;background:#dadada;"></div>
<div class="a" style="left:0px;top:410px;width:1008px;height:1px;background:#dadada;"></div>
<div class="a" style="left:0px;top:425px;width:1008px;height:1px;background:#dadada;"></div>
<div class="a" style="left:0px;top:440px;width:1008px;height:1px;background:#dadada;"></div>
<div class="a" style="left:0px;top:455px;width:1008px;height:1px;background:#dadada;"></div>
<div class="a" style="left:0px;top:470px;width:1008px;height:1px;background:#dadada;"></div>
<div class="a" style="left:0px;top:485px;width:1008px;height:1px;background:#dadada;"></div>
<div class="a" style="left:0px;top:500px;width:1008px;height:1px;background:#dadada;"></div>
<div class="a" style="left:0px;top:515px;width:1008px;height:1px;background:#dadada;"></div>
<div class="a" style="left:0px;top:530px;width:1008px;height:1px;background:#dadada;"></div>
<div class="a" style="left:20px;top:167px;width:599px;height:14px;background:#fff;"></div>
<div class="a" style="left:289px;top:242px;width:80px;height:14px;background:#fff;"></div>
<div class="a" style="left:101px;top:257px;width:10px;height:14px;background:#fff;"></div>
<div class="a" style="left:784px;top:486px;width:20px;height:14px;background:#fff;"></div>
<div class="a t" style="left:-340.0px;width:800px;text-align:center;top:154.96px;font-size:9.5px;line-height:9.5px;color:#5a7566;font-weight:normal;transform:scaleX(0.93);transform-origin:center top;">A</div>
<div class="a t" style="left:-205.0px;width:800px;text-align:center;top:154.96px;font-size:9.5px;line-height:9.5px;color:#5a7566;font-weight:normal;transform:scaleX(0.93);transform-origin:center top;">B</div>
<div class="a t" style="left:-70.0px;width:800px;text-align:center;top:154.96px;font-size:9.5px;line-height:9.5px;color:#5a7566;font-weight:normal;transform:scaleX(0.93);transform-origin:center top;">C</div>
<div class="a t" style="left:12.5px;width:800px;text-align:center;top:154.96px;font-size:9.5px;line-height:9.5px;color:#5a7566;font-weight:normal;transform:scaleX(0.93);transform-origin:center top;">D</div>
<div class="a t" style="left:95.0px;width:800px;text-align:center;top:154.96px;font-size:9.5px;line-height:9.5px;color:#5a7566;font-weight:normal;transform:scaleX(0.93);transform-origin:center top;">E</div>
<div class="a t" style="left:177.5px;width:800px;text-align:center;top:154.96px;font-size:9.5px;line-height:9.5px;color:#5a7566;font-weight:normal;transform:scaleX(0.93);transform-origin:center top;">F</div>
<div class="a t" style="left:260.0px;width:800px;text-align:center;top:154.96px;font-size:9.5px;line-height:9.5px;color:#666;font-weight:normal;transform:scaleX(0.93);transform-origin:center top;">G</div>
<div class="a t" style="left:342.5px;width:800px;text-align:center;top:154.96px;font-size:9.5px;line-height:9.5px;color:#666;font-weight:normal;transform:scaleX(0.93);transform-origin:center top;">H</div>
<div class="a t" style="left:425.0px;width:800px;text-align:center;top:154.96px;font-size:9.5px;line-height:9.5px;color:#666;font-weight:normal;transform:scaleX(0.93);transform-origin:center top;">I</div>
<div class="a t" style="left:507.5px;width:800px;text-align:center;top:154.96px;font-size:9.5px;line-height:9.5px;color:#666;font-weight:normal;transform:scaleX(0.93);transform-origin:center top;">J</div>
<div class="a t" style="left:590px;width:800px;text-align:center;top:154.96px;font-size:9.5px;line-height:9.5px;color:#666;font-weight:normal;transform:scaleX(0.93);transform-origin:center top;">K</div>
<div class="a t" style="left:-390.5px;width:800px;text-align:center;top:169.53px;font-size:10px;line-height:10px;color:#3c6e54;font-weight:normal;">1</div>
<div class="a t" style="left:-390.5px;width:800px;text-align:center;top:184.53px;font-size:10px;line-height:10px;color:#666;font-weight:normal;">2</div>
<div class="a t" style="left:-390.5px;width:800px;text-align:center;top:199.53px;font-size:10px;line-height:10px;color:#666;font-weight:normal;">3</div>
<div class="a t" style="left:-390.5px;width:800px;text-align:center;top:214.53px;font-size:10px;line-height:10px;color:#666;font-weight:normal;">4</div>
<div class="a t" style="left:-390.5px;width:800px;text-align:center;top:229.53px;font-size:10px;line-height:10px;color:#666;font-weight:normal;">5</div>
<div class="a t" style="left:-390.5px;width:800px;text-align:center;top:244.53px;font-size:10px;line-height:10px;color:#666;font-weight:normal;">6</div>
<div class="a t" style="left:-390.5px;width:800px;text-align:center;top:259.54px;font-size:10px;line-height:10px;color:#666;font-weight:normal;">7</div>
<div class="a t" style="left:-390.5px;width:800px;text-align:center;top:274.54px;font-size:10px;line-height:10px;color:#666;font-weight:normal;">8</div>
<div class="a t" style="left:-390.5px;width:800px;text-align:center;top:304.54px;font-size:10px;line-height:10px;color:#666;font-weight:normal;">9</div>
<div class="a t" style="left:-390.5px;width:800px;text-align:center;top:338.54px;font-size:10px;line-height:10px;color:#666;font-weight:normal;">10</div>
<div class="a t" style="left:-390.5px;width:800px;text-align:center;top:353.54px;font-size:10px;line-height:10px;color:#666;font-weight:normal;">11</div>
<div class="a t" style="left:-390.5px;width:800px;text-align:center;top:368.54px;font-size:10px;line-height:10px;color:#666;font-weight:normal;">12</div>
<div class="a t" style="left:-390.5px;width:800px;text-align:center;top:383.54px;font-size:10px;line-height:10px;color:#666;font-weight:normal;">13</div>
<div class="a t" style="left:-390.5px;width:800px;text-align:center;top:398.54px;font-size:10px;line-height:10px;color:#666;font-weight:normal;">14</div>
<div class="a t" style="left:-390.5px;width:800px;text-align:center;top:413.54px;font-size:10px;line-height:10px;color:#666;font-weight:normal;">15</div>
<div class="a t" style="left:-390.5px;width:800px;text-align:center;top:428.54px;font-size:10px;line-height:10px;color:#666;font-weight:normal;">16</div>
<div class="a t" style="left:-390.5px;width:800px;text-align:center;top:443.54px;font-size:10px;line-height:10px;color:#666;font-weight:normal;">17</div>
<div class="a t" style="left:-390.5px;width:800px;text-align:center;top:458.54px;font-size:10px;line-height:10px;color:#666;font-weight:normal;">18</div>
<div class="a t" style="left:-390.5px;width:800px;text-align:center;top:473.54px;font-size:10px;line-height:10px;color:#666;font-weight:normal;">19</div>
<div class="a t" style="left:-390.5px;width:800px;text-align:center;top:488.54px;font-size:10px;line-height:10px;color:#666;font-weight:normal;">20</div>
<div class="a t" style="left:-390.5px;width:800px;text-align:center;top:503.54px;font-size:10px;line-height:10px;color:#666;font-weight:normal;">21</div>
<div class="a t" style="left:-390.5px;width:800px;text-align:center;top:518.53px;font-size:10px;line-height:10px;color:#666;font-weight:normal;">22</div>
<div class="a t" style="left:-390.5px;width:800px;text-align:center;top:533.53px;font-size:10px;line-height:10px;color:#666;font-weight:normal;">23</div>
<div class="a t" style="left:21px;top:170.53px;font-size:10px;line-height:10px;color:#222;font-weight:bold;transform:scaleX(0.916);transform-origin:left top;-webkit-text-stroke:0.25px currentColor;">FORMATO 13.1: REGISTRO DE INVENTARIO PERMANENTE VALORIZADO - DETALLE DEL INVENTARIO VALORIZADO</div>
<div class="a t" style="left:21px;top:215.53px;font-size:10px;line-height:10px;color:#222;font-weight:bold;transform:scaleX(0.916);transform-origin:left top;-webkit-text-stroke:0.25px currentColor;">PERÍODO:</div>
<div class="a t" style="left:103px;top:215.53px;font-size:10px;line-height:10px;color:#222;font-weight:bold;transform:scaleX(0.916);transform-origin:left top;-webkit-text-stroke:0.25px currentColor;">2025500</div>
<div class="a t" style="left:21px;top:230.53px;font-size:10px;line-height:10px;color:#222;font-weight:bold;transform:scaleX(0.916);transform-origin:left top;-webkit-text-stroke:0.25px currentColor;">RUC:</div>
<div class="a t" style="left:103px;top:230.53px;font-size:10px;line-height:10px;color:#222;font-weight:bold;transform:scaleX(0.916);transform-origin:left top;-webkit-text-stroke:0.25px currentColor;">20605310321</div>
<div class="a t" style="left:21px;top:245.53px;font-size:10px;line-height:10px;color:#222;font-weight:bold;transform:scaleX(0.916);transform-origin:left top;-webkit-text-stroke:0.25px currentColor;">RAZÓN SOCIAL:</div>
<div class="a t" style="left:103px;top:245.53px;font-size:10px;line-height:10px;color:#222;font-weight:bold;transform:scaleX(0.916);transform-origin:left top;-webkit-text-stroke:0.25px currentColor;">F &amp; M SOL SERVICE SOCIEDAD ANONIMA CERRADA</div>
<div class="a t" style="left:21px;top:260.54px;font-size:10px;line-height:10px;color:#222;font-weight:bold;transform:scaleX(0.916);transform-origin:left top;-webkit-text-stroke:0.25px currentColor;">ESTABLECIMIENTO:</div>
<div class="a" style="left:20px;top:287px;width:988px;height:63px;background:#fff;"></div>
<div class="a t" style="left:-40px;width:800px;text-align:center;top:297.04px;font-size:10px;line-height:10px;color:#222;font-weight:bold;transform:scaleX(0.927);transform-origin:center top;-webkit-text-stroke:0.2px currentColor;">DOCUMENTO DE TRASLADO, COMPROBANTE DE PAGO, DOCUMENTO INTERNO O SIMILAR</div>
<div class="a t" style="left:342.5px;width:800px;text-align:center;top:299.04px;font-size:10px;line-height:10px;color:#222;font-weight:bold;transform:scaleX(0.916);transform-origin:center top;-webkit-text-stroke:0.2px currentColor;">TIPO DE</div>
<div class="a t" style="left:342.5px;width:800px;text-align:center;top:314.04px;font-size:10px;line-height:10px;color:#222;font-weight:bold;transform:scaleX(0.916);transform-origin:center top;-webkit-text-stroke:0.2px currentColor;">OPERACIÓN</div>
<div class="a t" style="left:342.5px;width:800px;text-align:center;top:329.04px;font-size:10px;line-height:10px;color:#222;font-weight:bold;transform:scaleX(0.916);transform-origin:center top;-webkit-text-stroke:0.2px currentColor;">(TABLA 12)</div>
<div class="a t" style="left:466.5px;width:800px;text-align:center;top:297.04px;font-size:10px;line-height:10px;color:#222;font-weight:bold;transform:scaleX(0.916);transform-origin:center top;-webkit-text-stroke:0.2px currentColor;">PRECIO UNITARIO</div>
<div class="a t" style="left:-340.0px;width:800px;text-align:center;top:330.04px;font-size:10px;line-height:10px;color:#222;font-weight:bold;transform:scaleX(0.916);transform-origin:center top;-webkit-text-stroke:0.2px currentColor;">PERIODO</div>
<div class="a t" style="left:-205.0px;width:800px;text-align:center;top:330.04px;font-size:10px;line-height:10px;color:#222;font-weight:bold;transform:scaleX(0.916);transform-origin:center top;-webkit-text-stroke:0.2px currentColor;">PRODUCTO</div>
<div class="a t" style="left:-70.0px;width:800px;text-align:center;top:330.04px;font-size:10px;line-height:10px;color:#222;font-weight:bold;transform:scaleX(0.916);transform-origin:center top;-webkit-text-stroke:0.2px currentColor;">FECHA</div>
<div class="a t" style="left:12.5px;width:800px;text-align:center;top:330.04px;font-size:10px;line-height:10px;color:#333d47;font-weight:bold;transform:scaleX(0.916);transform-origin:center top;-webkit-text-stroke:0.2px currentColor;">PROVEEDOR</div>
<div class="a t" style="left:95.0px;width:800px;text-align:center;top:330.04px;font-size:10px;line-height:10px;color:#222;font-weight:bold;transform:scaleX(0.916);transform-origin:center top;-webkit-text-stroke:0.2px currentColor;">TIPO (TABLA 10)</div>
<div class="a t" style="left:177.5px;width:800px;text-align:center;top:330.04px;font-size:10px;line-height:10px;color:#222;font-weight:bold;transform:scaleX(0.916);transform-origin:center top;-webkit-text-stroke:0.2px currentColor;">SERIE</div>
<div class="a t" style="left:260.0px;width:800px;text-align:center;top:330.04px;font-size:10px;line-height:10px;color:#222;font-weight:bold;transform:scaleX(0.916);transform-origin:center top;-webkit-text-stroke:0.2px currentColor;">NÚMERO</div>
<div class="a t" style="left:425.0px;width:800px;text-align:center;top:330.04px;font-size:10px;line-height:10px;color:#222;font-weight:bold;transform:scaleX(0.916);transform-origin:center top;-webkit-text-stroke:0.2px currentColor;">PRECIO $</div>
<div class="a t" style="left:507.5px;width:800px;text-align:center;top:330.04px;font-size:10px;line-height:10px;color:#222;font-weight:bold;transform:scaleX(0.916);transform-origin:center top;-webkit-text-stroke:0.2px currentColor;">TIPO DE CAMBIO</div>
<div class="a" style="left:950px;top:320px;width:58px;height:28px;overflow:hidden">
<div class="a t" style="left:-359.5px;width:800px;text-align:center;top:10.04px;font-size:10px;line-height:10px;color:#222;font-weight:bold;transform:scaleX(0.916);transform-origin:center top;-webkit-text-stroke:0.2px currentColor;">CANTIDAD</div>
</div>
<div class="a t" style="left:21px;top:354.54px;font-size:10px;line-height:10px;color:#222;font-weight:normal;transform:scaleX(0.95);transform-origin:left top;-webkit-text-stroke:0.25px currentColor;">20250500</div>
<div class="a t" style="left:103px;top:354.03px;font-size:10.6px;line-height:10.6px;color:#222;font-weight:normal;-webkit-text-stroke:0.25px currentColor;">Producto con Inventario</div>
<div class="a t" style="left:291px;top:354.54px;font-size:10px;line-height:10px;color:#222;font-weight:normal;-webkit-text-stroke:0.25px currentColor;">02/05/2025</div>
<div class="a t" style="left:456px;top:354.54px;font-size:10px;line-height:10px;color:#bbb;font-weight:normal;transform:scaleX(0.95);transform-origin:left top;-webkit-text-stroke:0.25px currentColor;">00</div>
<div class="a t" style="left:538px;top:354.54px;font-size:10px;line-height:10px;color:#222;font-weight:normal;transform:scaleX(0.95);transform-origin:left top;-webkit-text-stroke:0.25px currentColor;">0</div>
<div class="a t" style="left:621px;top:354.54px;font-size:10px;line-height:10px;color:#222;font-weight:normal;transform:scaleX(0.95);transform-origin:left top;-webkit-text-stroke:0.25px currentColor;">0</div>
<div class="a t" style="left:703px;top:354.54px;font-size:10px;line-height:10px;color:#222;font-weight:normal;transform:scaleX(0.95);transform-origin:left top;-webkit-text-stroke:0.25px currentColor;">99</div>
<div class="a t" style="left:786px;top:354.54px;font-size:10px;line-height:10px;color:#222;font-weight:normal;transform:scaleX(0.95);transform-origin:left top;-webkit-text-stroke:0.25px currentColor;">36.0</div>
<div class="a t" style="left:868px;top:354.54px;font-size:10px;line-height:10px;color:#222;font-weight:normal;transform:scaleX(0.95);transform-origin:left top;-webkit-text-stroke:0.25px currentColor;">1.000</div>
<div class="a t" style="left:951px;top:354.54px;font-size:10px;line-height:10px;color:#222;font-weight:normal;transform:scaleX(0.95);transform-origin:left top;-webkit-text-stroke:0.25px currentColor;">0.00000000</div>
<div class="a t" style="left:21px;top:369.54px;font-size:10px;line-height:10px;color:#222;font-weight:normal;transform:scaleX(0.95);transform-origin:left top;-webkit-text-stroke:0.25px currentColor;">20250500</div>
<div class="a t" style="left:103px;top:369.03px;font-size:10.6px;line-height:10.6px;color:#222;font-weight:normal;-webkit-text-stroke:0.25px currentColor;">Producto con Inventario</div>
<div class="a t" style="left:291px;top:369.54px;font-size:10px;line-height:10px;color:#222;font-weight:normal;-webkit-text-stroke:0.25px currentColor;">02/05/2025</div>
<div class="a t" style="left:456px;top:369.54px;font-size:10px;line-height:10px;color:#bbb;font-weight:normal;transform:scaleX(0.95);transform-origin:left top;-webkit-text-stroke:0.25px currentColor;">00</div>
<div class="a t" style="left:538px;top:369.54px;font-size:10px;line-height:10px;color:#222;font-weight:normal;transform:scaleX(0.95);transform-origin:left top;-webkit-text-stroke:0.25px currentColor;">0</div>
<div class="a t" style="left:621px;top:369.54px;font-size:10px;line-height:10px;color:#222;font-weight:normal;transform:scaleX(0.95);transform-origin:left top;-webkit-text-stroke:0.25px currentColor;">0</div>
<div class="a t" style="left:703px;top:369.54px;font-size:10px;line-height:10px;color:#222;font-weight:normal;transform:scaleX(0.95);transform-origin:left top;-webkit-text-stroke:0.25px currentColor;">99</div>
<div class="a t" style="left:786px;top:369.54px;font-size:10px;line-height:10px;color:#222;font-weight:normal;transform:scaleX(0.95);transform-origin:left top;-webkit-text-stroke:0.25px currentColor;">36.0</div>
<div class="a t" style="left:868px;top:369.54px;font-size:10px;line-height:10px;color:#222;font-weight:normal;transform:scaleX(0.95);transform-origin:left top;-webkit-text-stroke:0.25px currentColor;">1.000</div>
<div class="a t" style="left:951px;top:369.54px;font-size:10px;line-height:10px;color:#222;font-weight:normal;transform:scaleX(0.95);transform-origin:left top;-webkit-text-stroke:0.25px currentColor;">1.00000000</div>
<div class="a t" style="left:21px;top:384.54px;font-size:10px;line-height:10px;color:#222;font-weight:normal;transform:scaleX(0.95);transform-origin:left top;-webkit-text-stroke:0.25px currentColor;">20250500</div>
<div class="a t" style="left:103px;top:384.03px;font-size:10.6px;line-height:10.6px;color:#222;font-weight:normal;-webkit-text-stroke:0.25px currentColor;">Producto con Inventario</div>
<div class="a t" style="left:291px;top:384.54px;font-size:10px;line-height:10px;color:#222;font-weight:normal;-webkit-text-stroke:0.25px currentColor;">02/05/2025</div>
<div class="a t" style="left:456px;top:384.54px;font-size:10px;line-height:10px;color:#bbb;font-weight:normal;transform:scaleX(0.95);transform-origin:left top;-webkit-text-stroke:0.25px currentColor;">00</div>
<div class="a t" style="left:538px;top:384.54px;font-size:10px;line-height:10px;color:#222;font-weight:normal;transform:scaleX(0.95);transform-origin:left top;-webkit-text-stroke:0.25px currentColor;">0</div>
<div class="a t" style="left:621px;top:384.54px;font-size:10px;line-height:10px;color:#222;font-weight:normal;transform:scaleX(0.95);transform-origin:left top;-webkit-text-stroke:0.25px currentColor;">0</div>
<div class="a t" style="left:703px;top:384.54px;font-size:10px;line-height:10px;color:#222;font-weight:normal;transform:scaleX(0.95);transform-origin:left top;-webkit-text-stroke:0.25px currentColor;">99</div>
<div class="a t" style="left:786px;top:384.54px;font-size:10px;line-height:10px;color:#222;font-weight:normal;transform:scaleX(0.95);transform-origin:left top;-webkit-text-stroke:0.25px currentColor;">36.0</div>
<div class="a t" style="left:868px;top:384.54px;font-size:10px;line-height:10px;color:#222;font-weight:normal;transform:scaleX(0.95);transform-origin:left top;-webkit-text-stroke:0.25px currentColor;">1.000</div>
<div class="a t" style="left:951px;top:384.54px;font-size:10px;line-height:10px;color:#222;font-weight:normal;transform:scaleX(0.95);transform-origin:left top;-webkit-text-stroke:0.25px currentColor;">0.00000000</div>
<div class="a t" style="left:21px;top:399.54px;font-size:10px;line-height:10px;color:#222;font-weight:normal;transform:scaleX(0.95);transform-origin:left top;-webkit-text-stroke:0.25px currentColor;">20250500</div>
<div class="a t" style="left:103px;top:399.03px;font-size:10.6px;line-height:10.6px;color:#222;font-weight:normal;-webkit-text-stroke:0.25px currentColor;">Producto con Inventario</div>
<div class="a t" style="left:291px;top:399.54px;font-size:10px;line-height:10px;color:#222;font-weight:normal;-webkit-text-stroke:0.25px currentColor;">02/05/2025</div>
<div class="a t" style="left:456px;top:399.54px;font-size:10px;line-height:10px;color:#bbb;font-weight:normal;transform:scaleX(0.95);transform-origin:left top;-webkit-text-stroke:0.25px currentColor;">00</div>
<div class="a t" style="left:538px;top:399.54px;font-size:10px;line-height:10px;color:#222;font-weight:normal;transform:scaleX(0.95);transform-origin:left top;-webkit-text-stroke:0.25px currentColor;">0</div>
<div class="a t" style="left:621px;top:399.54px;font-size:10px;line-height:10px;color:#222;font-weight:normal;transform:scaleX(0.95);transform-origin:left top;-webkit-text-stroke:0.25px currentColor;">0</div>
<div class="a t" style="left:703px;top:399.54px;font-size:10px;line-height:10px;color:#222;font-weight:normal;transform:scaleX(0.95);transform-origin:left top;-webkit-text-stroke:0.25px currentColor;">99</div>
<div class="a t" style="left:786px;top:399.54px;font-size:10px;line-height:10px;color:#222;font-weight:normal;transform:scaleX(0.95);transform-origin:left top;-webkit-text-stroke:0.25px currentColor;">36.0</div>
<div class="a t" style="left:868px;top:399.54px;font-size:10px;line-height:10px;color:#222;font-weight:normal;transform:scaleX(0.95);transform-origin:left top;-webkit-text-stroke:0.25px currentColor;">1.000</div>
<div class="a t" style="left:951px;top:399.54px;font-size:10px;line-height:10px;color:#222;font-weight:normal;transform:scaleX(0.95);transform-origin:left top;-webkit-text-stroke:0.25px currentColor;">0.00000000</div>
<div class="a t" style="left:21px;top:414.54px;font-size:10px;line-height:10px;color:#222;font-weight:normal;transform:scaleX(0.95);transform-origin:left top;-webkit-text-stroke:0.25px currentColor;">20250500</div>
<div class="a t" style="left:103px;top:414.03px;font-size:10.6px;line-height:10.6px;color:#222;font-weight:normal;-webkit-text-stroke:0.25px currentColor;">Producto con Inventario</div>
<div class="a t" style="left:291px;top:414.54px;font-size:10px;line-height:10px;color:#222;font-weight:normal;-webkit-text-stroke:0.25px currentColor;">02/05/2025</div>
<div class="a t" style="left:456px;top:414.54px;font-size:10px;line-height:10px;color:#bbb;font-weight:normal;transform:scaleX(0.95);transform-origin:left top;-webkit-text-stroke:0.25px currentColor;">00</div>
<div class="a t" style="left:538px;top:414.54px;font-size:10px;line-height:10px;color:#222;font-weight:normal;transform:scaleX(0.95);transform-origin:left top;-webkit-text-stroke:0.25px currentColor;">0</div>
<div class="a t" style="left:621px;top:414.54px;font-size:10px;line-height:10px;color:#222;font-weight:normal;transform:scaleX(0.95);transform-origin:left top;-webkit-text-stroke:0.25px currentColor;">0</div>
<div class="a t" style="left:703px;top:414.54px;font-size:10px;line-height:10px;color:#222;font-weight:normal;transform:scaleX(0.95);transform-origin:left top;-webkit-text-stroke:0.25px currentColor;">99</div>
<div class="a t" style="left:786px;top:414.54px;font-size:10px;line-height:10px;color:#222;font-weight:normal;transform:scaleX(0.95);transform-origin:left top;-webkit-text-stroke:0.25px currentColor;">36.0</div>
<div class="a t" style="left:868px;top:414.54px;font-size:10px;line-height:10px;color:#222;font-weight:normal;transform:scaleX(0.95);transform-origin:left top;-webkit-text-stroke:0.25px currentColor;">1.000</div>
<div class="a t" style="left:951px;top:414.54px;font-size:10px;line-height:10px;color:#222;font-weight:normal;transform:scaleX(0.95);transform-origin:left top;-webkit-text-stroke:0.25px currentColor;">1.00000000</div>
<div class="a t" style="left:21px;top:429.54px;font-size:10px;line-height:10px;color:#222;font-weight:normal;transform:scaleX(0.95);transform-origin:left top;-webkit-text-stroke:0.25px currentColor;">20250500</div>
<div class="a t" style="left:103px;top:429.03px;font-size:10.6px;line-height:10.6px;color:#222;font-weight:normal;-webkit-text-stroke:0.25px currentColor;">Producto con Inventario</div>
<div class="a t" style="left:291px;top:429.54px;font-size:10px;line-height:10px;color:#222;font-weight:normal;-webkit-text-stroke:0.25px currentColor;">02/05/2025</div>
<div class="a t" style="left:456px;top:429.54px;font-size:10px;line-height:10px;color:#bbb;font-weight:normal;transform:scaleX(0.95);transform-origin:left top;-webkit-text-stroke:0.25px currentColor;">00</div>
<div class="a t" style="left:538px;top:429.54px;font-size:10px;line-height:10px;color:#222;font-weight:normal;transform:scaleX(0.95);transform-origin:left top;-webkit-text-stroke:0.25px currentColor;">0</div>
<div class="a t" style="left:621px;top:429.54px;font-size:10px;line-height:10px;color:#222;font-weight:normal;transform:scaleX(0.95);transform-origin:left top;-webkit-text-stroke:0.25px currentColor;">0</div>
<div class="a t" style="left:703px;top:429.54px;font-size:10px;line-height:10px;color:#222;font-weight:normal;transform:scaleX(0.95);transform-origin:left top;-webkit-text-stroke:0.25px currentColor;">99</div>
<div class="a t" style="left:786px;top:429.54px;font-size:10px;line-height:10px;color:#222;font-weight:normal;transform:scaleX(0.95);transform-origin:left top;-webkit-text-stroke:0.25px currentColor;">36.0</div>
<div class="a t" style="left:868px;top:429.54px;font-size:10px;line-height:10px;color:#222;font-weight:normal;transform:scaleX(0.95);transform-origin:left top;-webkit-text-stroke:0.25px currentColor;">1.000</div>
<div class="a t" style="left:951px;top:429.54px;font-size:10px;line-height:10px;color:#222;font-weight:normal;transform:scaleX(0.95);transform-origin:left top;-webkit-text-stroke:0.25px currentColor;">0.00000000</div>
<div class="a t" style="left:21px;top:444.54px;font-size:10px;line-height:10px;color:#222;font-weight:normal;transform:scaleX(0.95);transform-origin:left top;-webkit-text-stroke:0.25px currentColor;">20250500</div>
<div class="a t" style="left:103px;top:444.03px;font-size:10.6px;line-height:10.6px;color:#222;font-weight:normal;-webkit-text-stroke:0.25px currentColor;">Producto con Inventario</div>
<div class="a t" style="left:291px;top:444.54px;font-size:10px;line-height:10px;color:#222;font-weight:normal;-webkit-text-stroke:0.25px currentColor;">02/05/2025</div>
<div class="a t" style="left:456px;top:444.54px;font-size:10px;line-height:10px;color:#bbb;font-weight:normal;transform:scaleX(0.95);transform-origin:left top;-webkit-text-stroke:0.25px currentColor;">00</div>
<div class="a t" style="left:538px;top:444.54px;font-size:10px;line-height:10px;color:#222;font-weight:normal;transform:scaleX(0.95);transform-origin:left top;-webkit-text-stroke:0.25px currentColor;">0</div>
<div class="a t" style="left:621px;top:444.54px;font-size:10px;line-height:10px;color:#222;font-weight:normal;transform:scaleX(0.95);transform-origin:left top;-webkit-text-stroke:0.25px currentColor;">0</div>
<div class="a t" style="left:703px;top:444.54px;font-size:10px;line-height:10px;color:#222;font-weight:normal;transform:scaleX(0.95);transform-origin:left top;-webkit-text-stroke:0.25px currentColor;">99</div>
<div class="a t" style="left:786px;top:444.54px;font-size:10px;line-height:10px;color:#222;font-weight:normal;transform:scaleX(0.95);transform-origin:left top;-webkit-text-stroke:0.25px currentColor;">36.0</div>
<div class="a t" style="left:868px;top:444.54px;font-size:10px;line-height:10px;color:#222;font-weight:normal;transform:scaleX(0.95);transform-origin:left top;-webkit-text-stroke:0.25px currentColor;">1.000</div>
<div class="a t" style="left:951px;top:444.54px;font-size:10px;line-height:10px;color:#222;font-weight:normal;transform:scaleX(0.95);transform-origin:left top;-webkit-text-stroke:0.25px currentColor;">0.00000000</div>
<div class="a t" style="left:21px;top:459.54px;font-size:10px;line-height:10px;color:#222;font-weight:normal;transform:scaleX(0.95);transform-origin:left top;-webkit-text-stroke:0.25px currentColor;">20250500</div>
<div class="a t" style="left:103px;top:459.03px;font-size:10.6px;line-height:10.6px;color:#222;font-weight:normal;-webkit-text-stroke:0.25px currentColor;">Producto con Inventario</div>
<div class="a t" style="left:291px;top:459.54px;font-size:10px;line-height:10px;color:#222;font-weight:normal;-webkit-text-stroke:0.25px currentColor;">02/05/2025</div>
<div class="a t" style="left:456px;top:459.54px;font-size:10px;line-height:10px;color:#bbb;font-weight:normal;transform:scaleX(0.95);transform-origin:left top;-webkit-text-stroke:0.25px currentColor;">00</div>
<div class="a t" style="left:538px;top:459.54px;font-size:10px;line-height:10px;color:#222;font-weight:normal;transform:scaleX(0.95);transform-origin:left top;-webkit-text-stroke:0.25px currentColor;">0</div>
<div class="a t" style="left:621px;top:459.54px;font-size:10px;line-height:10px;color:#222;font-weight:normal;transform:scaleX(0.95);transform-origin:left top;-webkit-text-stroke:0.25px currentColor;">0</div>
<div class="a t" style="left:703px;top:459.54px;font-size:10px;line-height:10px;color:#222;font-weight:normal;transform:scaleX(0.95);transform-origin:left top;-webkit-text-stroke:0.25px currentColor;">99</div>
<div class="a t" style="left:786px;top:459.54px;font-size:10px;line-height:10px;color:#222;font-weight:normal;transform:scaleX(0.95);transform-origin:left top;-webkit-text-stroke:0.25px currentColor;">36.0</div>
<div class="a t" style="left:868px;top:459.54px;font-size:10px;line-height:10px;color:#222;font-weight:normal;transform:scaleX(0.95);transform-origin:left top;-webkit-text-stroke:0.25px currentColor;">1.000</div>
<div class="a t" style="left:951px;top:459.54px;font-size:10px;line-height:10px;color:#222;font-weight:normal;transform:scaleX(0.95);transform-origin:left top;-webkit-text-stroke:0.25px currentColor;">0.00000000</div>
<div class="a t" style="left:703px;top:489.54px;font-size:10px;line-height:10px;color:#222;font-weight:bold;transform:scaleX(0.875);transform-origin:left top;-webkit-text-stroke:0.25px currentColor;">SALDOS FINALES DEL MES</div>
<div class="a t" style="left:951px;top:489.54px;font-size:10px;line-height:10px;color:#222;font-weight:bold;transform:scaleX(0.916);transform-origin:left top;-webkit-text-stroke:0.25px currentColor;">2.00</div>
<div class="a" style="left:19px;top:286px;width:989px;height:1px;background:#333;"></div>
<div class="a" style="left:19px;top:316px;width:682px;height:1px;background:#333;"></div>
<div class="a" style="left:784px;top:316px;width:224px;height:1px;background:#333;"></div>
<div class="a" style="left:19px;top:350px;width:989px;height:1px;background:#333;"></div>
<div class="a" style="left:19px;top:365px;width:989px;height:1px;background:#333;"></div>
<div class="a" style="left:19px;top:380px;width:989px;height:1px;background:#333;"></div>
<div class="a" style="left:19px;top:395px;width:989px;height:1px;background:#333;"></div>
<div class="a" style="left:19px;top:410px;width:989px;height:1px;background:#333;"></div>
<div class="a" style="left:19px;top:425px;width:989px;height:1px;background:#333;"></div>
<div class="a" style="left:19px;top:440px;width:989px;height:1px;background:#333;"></div>
<div class="a" style="left:19px;top:455px;width:989px;height:1px;background:#333;"></div>
<div class="a" style="left:19px;top:470px;width:989px;height:1px;background:#333;"></div>
<div class="a" style="left:701px;top:286px;width:1px;height:185px;background:#333;"></div>
<div class="a" style="left:784px;top:286px;width:1px;height:185px;background:#333;"></div>
<div class="a" style="left:949px;top:286px;width:1px;height:185px;background:#333;"></div>
<div class="a" style="left:101px;top:316px;width:1px;height:155px;background:#333;"></div>
<div class="a" style="left:289px;top:316px;width:1px;height:155px;background:#333;"></div>
<div class="a" style="left:371px;top:316px;width:1px;height:155px;background:#333;"></div>
<div class="a" style="left:454px;top:316px;width:1px;height:155px;background:#333;"></div>
<div class="a" style="left:536px;top:316px;width:1px;height:155px;background:#333;"></div>
<div class="a" style="left:619px;top:316px;width:1px;height:155px;background:#333;"></div>
<div class="a" style="left:866px;top:316px;width:1px;height:155px;background:#333;"></div>
<svg class="a" style="left:102px;top:212px;" width="6" height="6" viewBox="0 0 6 6"><path d="M0 0 H6 L0 6 Z" fill="#1a7f37"/></svg>
<svg class="a" style="left:102px;top:227px;" width="6" height="6" viewBox="0 0 6 6"><path d="M0 0 H6 L0 6 Z" fill="#1a7f37"/></svg>
<svg class="a" style="left:20px;top:351px;" width="6" height="6" viewBox="0 0 6 6"><path d="M0 0 H6 L0 6 Z" fill="#1a7f37"/></svg>
<svg class="a" style="left:537px;top:351px;" width="6" height="6" viewBox="0 0 6 6"><path d="M0 0 H6 L0 6 Z" fill="#1a7f37"/></svg>
<svg class="a" style="left:620px;top:351px;" width="6" height="6" viewBox="0 0 6 6"><path d="M0 0 H6 L0 6 Z" fill="#1a7f37"/></svg>
<svg class="a" style="left:702px;top:351px;" width="6" height="6" viewBox="0 0 6 6"><path d="M0 0 H6 L0 6 Z" fill="#1a7f37"/></svg>
<svg class="a" style="left:785px;top:351px;" width="6" height="6" viewBox="0 0 6 6"><path d="M0 0 H6 L0 6 Z" fill="#1a7f37"/></svg>
<svg class="a" style="left:867px;top:351px;" width="6" height="6" viewBox="0 0 6 6"><path d="M0 0 H6 L0 6 Z" fill="#1a7f37"/></svg>
<svg class="a" style="left:950px;top:351px;" width="6" height="6" viewBox="0 0 6 6"><path d="M0 0 H6 L0 6 Z" fill="#1a7f37"/></svg>
<svg class="a" style="left:455px;top:351px;" width="6" height="6" viewBox="0 0 6 6"><path d="M0 0 H6 L0 6 Z" fill="#c9d3cc"/></svg>
<svg class="a" style="left:20px;top:366px;" width="6" height="6" viewBox="0 0 6 6"><path d="M0 0 H6 L0 6 Z" fill="#1a7f37"/></svg>
<svg class="a" style="left:537px;top:366px;" width="6" height="6" viewBox="0 0 6 6"><path d="M0 0 H6 L0 6 Z" fill="#1a7f37"/></svg>
<svg class="a" style="left:620px;top:366px;" width="6" height="6" viewBox="0 0 6 6"><path d="M0 0 H6 L0 6 Z" fill="#1a7f37"/></svg>
<svg class="a" style="left:702px;top:366px;" width="6" height="6" viewBox="0 0 6 6"><path d="M0 0 H6 L0 6 Z" fill="#1a7f37"/></svg>
<svg class="a" style="left:785px;top:366px;" width="6" height="6" viewBox="0 0 6 6"><path d="M0 0 H6 L0 6 Z" fill="#1a7f37"/></svg>
<svg class="a" style="left:867px;top:366px;" width="6" height="6" viewBox="0 0 6 6"><path d="M0 0 H6 L0 6 Z" fill="#1a7f37"/></svg>
<svg class="a" style="left:950px;top:366px;" width="6" height="6" viewBox="0 0 6 6"><path d="M0 0 H6 L0 6 Z" fill="#1a7f37"/></svg>
<svg class="a" style="left:455px;top:366px;" width="6" height="6" viewBox="0 0 6 6"><path d="M0 0 H6 L0 6 Z" fill="#c9d3cc"/></svg>
<svg class="a" style="left:20px;top:381px;" width="6" height="6" viewBox="0 0 6 6"><path d="M0 0 H6 L0 6 Z" fill="#1a7f37"/></svg>
<svg class="a" style="left:537px;top:381px;" width="6" height="6" viewBox="0 0 6 6"><path d="M0 0 H6 L0 6 Z" fill="#1a7f37"/></svg>
<svg class="a" style="left:620px;top:381px;" width="6" height="6" viewBox="0 0 6 6"><path d="M0 0 H6 L0 6 Z" fill="#1a7f37"/></svg>
<svg class="a" style="left:702px;top:381px;" width="6" height="6" viewBox="0 0 6 6"><path d="M0 0 H6 L0 6 Z" fill="#1a7f37"/></svg>
<svg class="a" style="left:785px;top:381px;" width="6" height="6" viewBox="0 0 6 6"><path d="M0 0 H6 L0 6 Z" fill="#1a7f37"/></svg>
<svg class="a" style="left:867px;top:381px;" width="6" height="6" viewBox="0 0 6 6"><path d="M0 0 H6 L0 6 Z" fill="#1a7f37"/></svg>
<svg class="a" style="left:950px;top:381px;" width="6" height="6" viewBox="0 0 6 6"><path d="M0 0 H6 L0 6 Z" fill="#1a7f37"/></svg>
<svg class="a" style="left:455px;top:381px;" width="6" height="6" viewBox="0 0 6 6"><path d="M0 0 H6 L0 6 Z" fill="#c9d3cc"/></svg>
<svg class="a" style="left:20px;top:396px;" width="6" height="6" viewBox="0 0 6 6"><path d="M0 0 H6 L0 6 Z" fill="#1a7f37"/></svg>
<svg class="a" style="left:537px;top:396px;" width="6" height="6" viewBox="0 0 6 6"><path d="M0 0 H6 L0 6 Z" fill="#1a7f37"/></svg>
<svg class="a" style="left:620px;top:396px;" width="6" height="6" viewBox="0 0 6 6"><path d="M0 0 H6 L0 6 Z" fill="#1a7f37"/></svg>
<svg class="a" style="left:702px;top:396px;" width="6" height="6" viewBox="0 0 6 6"><path d="M0 0 H6 L0 6 Z" fill="#1a7f37"/></svg>
<svg class="a" style="left:785px;top:396px;" width="6" height="6" viewBox="0 0 6 6"><path d="M0 0 H6 L0 6 Z" fill="#1a7f37"/></svg>
<svg class="a" style="left:867px;top:396px;" width="6" height="6" viewBox="0 0 6 6"><path d="M0 0 H6 L0 6 Z" fill="#1a7f37"/></svg>
<svg class="a" style="left:950px;top:396px;" width="6" height="6" viewBox="0 0 6 6"><path d="M0 0 H6 L0 6 Z" fill="#1a7f37"/></svg>
<svg class="a" style="left:455px;top:396px;" width="6" height="6" viewBox="0 0 6 6"><path d="M0 0 H6 L0 6 Z" fill="#c9d3cc"/></svg>
<svg class="a" style="left:20px;top:411px;" width="6" height="6" viewBox="0 0 6 6"><path d="M0 0 H6 L0 6 Z" fill="#1a7f37"/></svg>
<svg class="a" style="left:537px;top:411px;" width="6" height="6" viewBox="0 0 6 6"><path d="M0 0 H6 L0 6 Z" fill="#1a7f37"/></svg>
<svg class="a" style="left:620px;top:411px;" width="6" height="6" viewBox="0 0 6 6"><path d="M0 0 H6 L0 6 Z" fill="#1a7f37"/></svg>
<svg class="a" style="left:702px;top:411px;" width="6" height="6" viewBox="0 0 6 6"><path d="M0 0 H6 L0 6 Z" fill="#1a7f37"/></svg>
<svg class="a" style="left:785px;top:411px;" width="6" height="6" viewBox="0 0 6 6"><path d="M0 0 H6 L0 6 Z" fill="#1a7f37"/></svg>
<svg class="a" style="left:867px;top:411px;" width="6" height="6" viewBox="0 0 6 6"><path d="M0 0 H6 L0 6 Z" fill="#1a7f37"/></svg>
<svg class="a" style="left:950px;top:411px;" width="6" height="6" viewBox="0 0 6 6"><path d="M0 0 H6 L0 6 Z" fill="#1a7f37"/></svg>
<svg class="a" style="left:455px;top:411px;" width="6" height="6" viewBox="0 0 6 6"><path d="M0 0 H6 L0 6 Z" fill="#c9d3cc"/></svg>
<svg class="a" style="left:20px;top:426px;" width="6" height="6" viewBox="0 0 6 6"><path d="M0 0 H6 L0 6 Z" fill="#1a7f37"/></svg>
<svg class="a" style="left:537px;top:426px;" width="6" height="6" viewBox="0 0 6 6"><path d="M0 0 H6 L0 6 Z" fill="#1a7f37"/></svg>
<svg class="a" style="left:620px;top:426px;" width="6" height="6" viewBox="0 0 6 6"><path d="M0 0 H6 L0 6 Z" fill="#1a7f37"/></svg>
<svg class="a" style="left:702px;top:426px;" width="6" height="6" viewBox="0 0 6 6"><path d="M0 0 H6 L0 6 Z" fill="#1a7f37"/></svg>
<svg class="a" style="left:785px;top:426px;" width="6" height="6" viewBox="0 0 6 6"><path d="M0 0 H6 L0 6 Z" fill="#1a7f37"/></svg>
<svg class="a" style="left:867px;top:426px;" width="6" height="6" viewBox="0 0 6 6"><path d="M0 0 H6 L0 6 Z" fill="#1a7f37"/></svg>
<svg class="a" style="left:950px;top:426px;" width="6" height="6" viewBox="0 0 6 6"><path d="M0 0 H6 L0 6 Z" fill="#1a7f37"/></svg>
<svg class="a" style="left:455px;top:426px;" width="6" height="6" viewBox="0 0 6 6"><path d="M0 0 H6 L0 6 Z" fill="#c9d3cc"/></svg>
<svg class="a" style="left:20px;top:441px;" width="6" height="6" viewBox="0 0 6 6"><path d="M0 0 H6 L0 6 Z" fill="#1a7f37"/></svg>
<svg class="a" style="left:537px;top:441px;" width="6" height="6" viewBox="0 0 6 6"><path d="M0 0 H6 L0 6 Z" fill="#1a7f37"/></svg>
<svg class="a" style="left:620px;top:441px;" width="6" height="6" viewBox="0 0 6 6"><path d="M0 0 H6 L0 6 Z" fill="#1a7f37"/></svg>
<svg class="a" style="left:702px;top:441px;" width="6" height="6" viewBox="0 0 6 6"><path d="M0 0 H6 L0 6 Z" fill="#1a7f37"/></svg>
<svg class="a" style="left:785px;top:441px;" width="6" height="6" viewBox="0 0 6 6"><path d="M0 0 H6 L0 6 Z" fill="#1a7f37"/></svg>
<svg class="a" style="left:867px;top:441px;" width="6" height="6" viewBox="0 0 6 6"><path d="M0 0 H6 L0 6 Z" fill="#1a7f37"/></svg>
<svg class="a" style="left:950px;top:441px;" width="6" height="6" viewBox="0 0 6 6"><path d="M0 0 H6 L0 6 Z" fill="#1a7f37"/></svg>
<svg class="a" style="left:455px;top:441px;" width="6" height="6" viewBox="0 0 6 6"><path d="M0 0 H6 L0 6 Z" fill="#c9d3cc"/></svg>
<svg class="a" style="left:20px;top:456px;" width="6" height="6" viewBox="0 0 6 6"><path d="M0 0 H6 L0 6 Z" fill="#1a7f37"/></svg>
<svg class="a" style="left:537px;top:456px;" width="6" height="6" viewBox="0 0 6 6"><path d="M0 0 H6 L0 6 Z" fill="#1a7f37"/></svg>
<svg class="a" style="left:620px;top:456px;" width="6" height="6" viewBox="0 0 6 6"><path d="M0 0 H6 L0 6 Z" fill="#1a7f37"/></svg>
<svg class="a" style="left:702px;top:456px;" width="6" height="6" viewBox="0 0 6 6"><path d="M0 0 H6 L0 6 Z" fill="#1a7f37"/></svg>
<svg class="a" style="left:785px;top:456px;" width="6" height="6" viewBox="0 0 6 6"><path d="M0 0 H6 L0 6 Z" fill="#1a7f37"/></svg>
<svg class="a" style="left:867px;top:456px;" width="6" height="6" viewBox="0 0 6 6"><path d="M0 0 H6 L0 6 Z" fill="#1a7f37"/></svg>
<svg class="a" style="left:950px;top:456px;" width="6" height="6" viewBox="0 0 6 6"><path d="M0 0 H6 L0 6 Z" fill="#1a7f37"/></svg>
<svg class="a" style="left:455px;top:456px;" width="6" height="6" viewBox="0 0 6 6"><path d="M0 0 H6 L0 6 Z" fill="#c9d3cc"/></svg>
<svg class="a" style="left:950px;top:486px;" width="6" height="6" viewBox="0 0 6 6"><path d="M0 0 H6 L0 6 Z" fill="#1a7f37"/></svg>
<div class="a" style="left:18px;top:165px;width:602px;height:18px;border:2px solid #2d6b4b;box-sizing:border-box;"></div>
<div class="a" style="left:616px;top:179px;width:6px;height:5px;background:#2d6b4b;"></div>
<div class="a" style="left:367px;top:345px;width:91px;height:196px;background:#e3e3e5;filter:blur(5px);"></div>
<div class="a" style="left:1009px;top:152px;width:15px;height:385px;background:#fff;"></div>
<div class="a" style="left:1011px;top:153px;width:11px;height:12px;background:#fff;border:1px solid #bbb;box-sizing:border-box;"></div>
<svg class="a" style="left:1014px;top:157px;" width="6" height="4" viewBox="0 0 6 4"><path d="M0 3.5 L3 0 L6 3.5 Z" fill="#333"/></svg>
<div class="a" style="left:1011px;top:165px;width:11px;height:345px;background:#fff;border:1px solid #bbb;box-sizing:border-box;"></div>
<div class="a" style="left:1011px;top:510px;width:11px;height:16px;background:#e8e8e8;"></div>
<div class="a" style="left:1011px;top:526px;width:11px;height:11px;background:#fff;border:1px solid #bbb;box-sizing:border-box;"></div>
<svg class="a" style="left:1014px;top:530px;" width="6" height="4" viewBox="0 0 6 4"><path d="M0 0 L3 3.5 L6 0 Z" fill="#333"/></svg>
<div class="a" style="left:0px;top:537px;width:1024px;height:21px;background:#f3f3f3;"></div>
<div class="a" style="left:0px;top:537px;width:1008px;height:1px;background:#d4d4d4;"></div>
<svg class="a" style="left:19px;top:543px;" width="6" height="9" viewBox="0 0 6 9"><path d="M5 0.5 L1 4.5 L5 8.5" fill="#ccc"/></svg>
<svg class="a" style="left:40px;top:543px;" width="6" height="9" viewBox="0 0 6 9"><path d="M1 0.5 L5 4.5 L1 8.5" fill="#ccc"/></svg>
<div class="a" style="left:75px;top:537px;width:43px;height:19px;background:#fff;border:1px solid #d4d4d4;box-sizing:border-box;border-top:none;"></div>
<div class="a" style="left:75px;top:554px;width:43px;height:2px;background:#217346;"></div>
<div class="a t" style="left:-303.5px;width:800px;text-align:center;top:542.11px;font-size:10.5px;line-height:10.5px;color:#217346;font-weight:bold;transform:scaleX(0.8);transform-origin:center top;">13_01</div>
<svg class="a" style="left:141px;top:540px;" width="14" height="14" viewBox="0 0 14 14"><circle cx="7" cy="7" r="6" fill="none" stroke="#777" stroke-width="1"/><path d="M7 3.5 V10.5 M3.5 7 H10.5" stroke="#555" stroke-width="1.2"/></svg>
<div class="a" style="left:614px;top:543px;width:1px;height:1.5px;background:#aaa;"></div>
<div class="a" style="left:614px;top:546.5px;width:1px;height:1.5px;background:#aaa;"></div>
<div class="a" style="left:614px;top:550px;width:1px;height:1.5px;background:#aaa;"></div>
<div class="a" style="left:627px;top:542px;width:12px;height:12px;background:#fff;border:1px solid #bbb;box-sizing:border-box;"></div>
<svg class="a" style="left:630px;top:545px;" width="5" height="7" viewBox="0 0 5 7"><path d="M4 0 L0 3.5 L4 7 Z" fill="#333"/></svg>
<div class="a" style="left:638px;top:542px;width:209px;height:12px;background:#fff;border:1px solid #bbb;box-sizing:border-box;"></div>
<div class="a" style="left:997px;top:542px;width:12px;height:12px;background:#fff;border:1px solid #bbb;box-sizing:border-box;"></div>
<svg class="a" style="left:1001px;top:545px;" width="5" height="7" viewBox="0 0 5 7"><path d="M0 0 L4 3.5 L0 7 Z" fill="#333"/></svg>
<div class="a" style="left:368px;top:534px;width:88px;height:16px;background:rgba(220,220,224,0.7);filter:blur(4px);"></div>
<div class="a" style="left:0px;top:558px;width:1024px;height:15px;background:#217346;"></div>
<div class="a" style="left:0px;top:573px;width:1024px;height:2px;background:#f0f0f0;"></div>
<div class="a t" style="left:8px;top:562.88px;font-size:9px;line-height:9px;color:#e8f0ea;font-weight:normal;transform:scaleX(0.93);transform-origin:left top;">Listo</div>
<svg class="a" style="left:39px;top:560px;" width="14" height="12" viewBox="0 0 14 12"><path d="M5 2 A4 4 0 1 0 9 9" fill="none" stroke="#fff" stroke-width="1.1" stroke-dasharray="2 1"/><path d="M7 5 L12 11 M12 5 L7 11" stroke="#fff" stroke-width="1.3"/></svg>
<div class="a t" style="left:55px;top:562.88px;font-size:9px;line-height:9px;color:#fff;font-weight:bold;transform:scaleX(0.877);transform-origin:left top;">Accesibilidad: es necesario investigar</div>
<div class="a" style="left:800px;top:558px;width:30px;height:15px;background:#0f5a30;"></div>
<svg class="a" style="left:808px;top:560px;" width="12" height="11" viewBox="0 0 12 11"><path d="M0.5 0.5 H11.5 V10.5 H0.5 Z M4.5 0.5 V10.5 M8 0.5 V10.5 M0.5 4 H11.5 M0.5 7.3 H11.5" fill="none" stroke="#e8f0ea" stroke-width="1"/></svg>
<svg class="a" style="left:838px;top:560px;" width="12" height="11" viewBox="0 0 12 11"><rect x="0.5" y="0.5" width="11" height="10" fill="none" stroke="#cfe3d6" stroke-width="1"/><rect x="3" y="3" width="6" height="5" fill="none" stroke="#cfe3d6" stroke-width="1"/></svg>
<svg class="a" style="left:868px;top:560px;" width="12" height="11" viewBox="0 0 12 11"><rect x="0.5" y="0.5" width="11" height="10" fill="none" stroke="#cfe3d6" stroke-width="1"/><rect x="2" y="1" width="3" height="5" fill="#cfe3d6"/><rect x="6" y="1" width="3" height="5" fill="#cfe3d6"/></svg>
<div class="a" style="left:894px;top:565px;width:6px;height:1px;background:#e8f0ea;"></div>
<div class="a" style="left:904px;top:565px;width:75px;height:1px;background:#cfe3d6;"></div>
<div class="a" style="left:940px;top:561px;width:3px;height:9px;background:#fff;"></div>
<div class="a" style="left:982px;top:565px;width:7px;height:1px;background:#e8f0ea;"></div>
<div class="a" style="left:985px;top:562px;width:1px;height:7px;background:#e8f0ea;"></div>
<div class="a t" style="left:219px;width:800px;text-align:right;top:562.38px;font-size:9px;line-height:9px;color:#e8f0ea;font-weight:normal;transform:scaleX(0.93);transform-origin:right top;">100%</div>
<div class="a" style="left:492px;top:89px;width:39px;height:39px;border-radius:50%;background:#f5bd1f;"></div>
<div class="a t" style="left:111.19999999999999px;width:800px;text-align:center;top:91.99px;font-size:32.5px;line-height:32.5px;color:#1a1a1a;font-weight:normal;transform:scaleX(0.95);transform-origin:center top;">12</div>
</body></html>
